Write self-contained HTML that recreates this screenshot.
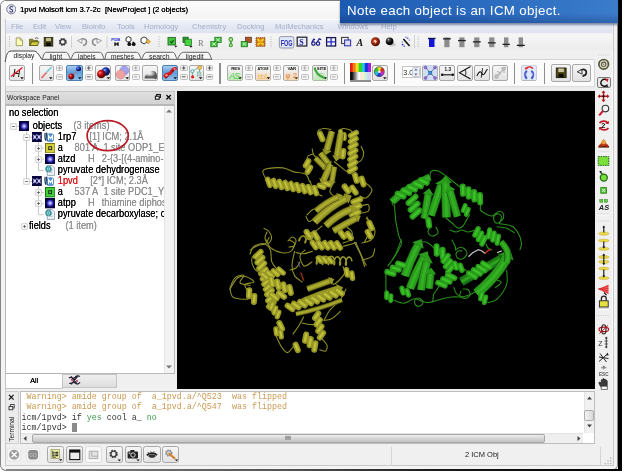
<!DOCTYPE html>
<html lang="en">
<head>
<meta charset="utf-8">
<title>1pvd Molsoft icm 3.7-2c</title>
<style>
*{box-sizing:border-box;margin:0;padding:0}
html,body{width:630px;height:476px;overflow:hidden;background:#fff}
body{font-family:"Liberation Sans",sans-serif;position:relative;color:#000}
.a{position:absolute}
.t{position:absolute;white-space:nowrap;line-height:1}
#win{left:0;top:0;width:618px;height:470.500px;background:#f3f3f3;border:1px solid #858585;border-radius:6px 0 6px 6px;border-top-color:#7c7c7c}
#shadowR{left:618.400px;top:0;width:3.400px;height:470.800px;background:#000}
#title{left:20px;top:5.500px;font-size:7.750px;color:#000;text-shadow:0 0 0.400px #000;letter-spacing:-0.05px}
#menubar{left:6px;top:19px;width:606px;height:14px;background:linear-gradient(#eef1f8,#e3e7f3 60%,#dfe3f0);border-top:1px solid #fff}
.mi{top:22.5px;font-size:7.6px;color:#a4aec6}
.btn{position:absolute;border:1px solid #a9a9a9;border-radius:2px;background:linear-gradient(#f6f6f6,#e2e2e2)}
.btn.sel{background:linear-gradient(#a9cdee,#5f9fdc 45%,#8fbfe9);border-color:#4f7fb0}
.pm{position:absolute;width:7.5px;height:8px;border:1px solid #bdbdbd;border-radius:1.5px;background:#f4f4f4;font-size:6px;line-height:6px;text-align:center;color:#777}
.vsep{position:absolute;width:1px;background:#8e8e8e}
</style>
</head>
<body>
<div id="root" class="a" style="left:0;top:0;width:630px;height:476px;will-change:transform">
<div id="win" class="a"></div>
<div id="shadowR" class="a"></div>
<div class="a" style="left:1px;top:1px;width:616px;height:18px;background:linear-gradient(#fcfcfc,#f3f3f3);border-radius:5px 0 0 0"></div>
<div class="a" style="left:5px;top:19px;width:608.500px;height:447px;border:1px solid #c9c9c9;background:#f0f0f0"></div>
<div class="a" style="left:6px;top:469.300px;width:612px;height:1.400px;background:linear-gradient(90deg,#858585,#555 45%,#1a1a1a 70%,#000)"></div>
<!-- app icon -->
<svg class="a" style="left:5.800px;top:4.200px" width="10.500" height="10.500" viewBox="0 0 11 11"><circle cx="5.5" cy="5.5" r="4.8" fill="#e9e9f3" stroke="#6a6a86" stroke-width="0.9"/><path d="M7.3 3.2C5.5 2 3.6 3 4 4.5 4.4 5.8 7 5.3 7 7 7 8.5 4.8 8.8 3.6 7.8" fill="none" stroke="#3c3c78" stroke-width="1.1"/></svg>
<div id="title" class="t">1pvd Molsoft icm 3.7-2c&nbsp; [NewProject ] (2 objects)</div>
<div id="menubar" class="a"></div>
<div class="t mi" style="left:11px">File</div>
<div class="t mi" style="left:33px">Edit</div>
<div class="t mi" style="left:55px">View</div>
<div class="t mi" style="left:82px">Bioinfo</div>
<div class="t mi" style="left:117px">Tools</div>
<div class="t mi" style="left:144px">Homology</div>
<div class="t mi" style="left:192px">Chemistry</div>
<div class="t mi" style="left:237px">Docking</div>
<div class="t mi" style="left:275px">MolMechanics</div>
<div class="t mi" style="left:337.500px">Windows</div>
<div class="t mi" style="left:381px">Help</div>
<!-- toolbar 1 -->
<div class="a" style="left:6px;top:33.500px;width:606px;height:16.500px;background:linear-gradient(#f6f6f6,#ececec)"></div>
<svg class="a" style="left:5px;top:33px" width="600" height="18" viewBox="5 33 600 18" font-family="Liberation Sans, sans-serif">
<g fill="#b4b4b4"><g id="grip"><rect x="9" y="36.500" width="1" height="1"/><rect x="9" y="38.800" width="1" height="1"/><rect x="9" y="41.100" width="1" height="1"/><rect x="9" y="43.400" width="1" height="1"/><rect x="9" y="45.700" width="1" height="1"/></g>
<use href="#grip" x="149.500"/><use href="#grip" x="261.500"/><use href="#grip" x="408.700"/></g>
<path d="M71.500 36v12M107 36v12M414.500 35v13" stroke="#c9c9c9" stroke-width="0.800"/>
<!-- new -->
<path d="M16.200 37.900h4l2.300 2.300v5.400h-6.300z" fill="#ffffb4" stroke="#8a8a5a" stroke-width="0.800"/><path d="M20.200 37.900v2.300h2.300" fill="none" stroke="#8a8a5a" stroke-width="0.700"/>
<!-- open -->
<path d="M29.600 45.500v-6.300h3l1 1.200h4v5.100z" fill="#8e8a20" stroke="#4c4a10" stroke-width="0.700"/><path d="M29.800 45.500l2-3.700h7.400l-1.800 3.700z" fill="#d2cc3c" stroke="#4c4a10" stroke-width="0.700"/><path d="M35 38.600c1.200-1.300 2.700-1 3.400.2" fill="none" stroke="#222" stroke-width="0.700"/>
<!-- save -->
<rect x="44.200" y="37.500" width="8.600" height="8.600" fill="#4b4a16" stroke="#1d1c08" stroke-width="0.800"/><rect x="46" y="37.900" width="5" height="3.200" fill="#bdbb90"/><rect x="46.200" y="42.600" width="4.600" height="3.400" fill="#0c0c04"/>
<!-- gear -->
<circle cx="62.800" cy="41.900" r="3" fill="none" stroke="#3c3c3c" stroke-width="2" stroke-dasharray="1.500 0.860"/><circle cx="62.800" cy="41.900" r="2.500" fill="none" stroke="#3c3c3c" stroke-width="1.200"/>
<!-- undo / redo -->
<g fill="none" stroke="#8b8b8b" stroke-width="1.500"><path d="M81 39.800c2.600-2.200 6 -.4 5.400 2.800-.3 1.700-1.700 2.700-3.300 2.800"/><path d="M98 39.800c-2.600-2.200-6-.4-5.400 2.800.3 1.700 1.700 2.700 3.300 2.800"/></g>
<path d="M77.500 40.600l4.600-1.900-.2 4.600z" fill="#f4f4f4" stroke="#8b8b8b" stroke-width="0.800"/><path d="M101.500 40.600l-4.600-1.900.2 4.600z" fill="#f4f4f4" stroke="#8b8b8b" stroke-width="0.800"/>
<!-- PDB -->
<text x="111.300" y="40.600" font-size="4.300" font-weight="bold" fill="#2a2ad0">PDB</text><path d="M115 42.200v3.800M118 42.200v3.800M114.600 44h3.800" stroke="#111" stroke-width="1.300"/>
<!-- search mol -->
<path d="M126 38l2.400-1.400 2.600 1.300v3l-2.500 1.500-2.500-1.400z" fill="#fff" stroke="#222" stroke-width="0.900"/><circle cx="129.300" cy="44.200" r="1.900" fill="#111"/><circle cx="133.700" cy="44.200" r="1.900" fill="#111"/><path d="M128.500 41.500l1 2M133 41.800l.8 1.500" stroke="#111" stroke-width="1.300"/>
<!-- tag mol -->
<path d="M141 38.600l3-1.700 3 1.600.1 3.600-3 1.800-3.100-1.700z" fill="#fff" stroke="#222" stroke-width="0.900"/><path d="M146 41.300l2.300-2 2.200 2.500-2.300 2.200z" fill="#e8b53c" stroke="#a8781c" stroke-width="0.500"/>
<!-- green 1 -->
<rect x="168" y="37.400" width="7.400" height="7.600" fill="#3fc43a" stroke="#2a6a2a" stroke-width="0.900"/><path d="M170.300 41.400l1.300 1.400 2.100-2.800" stroke="#114411" stroke-width="1.100" fill="none"/><path d="M174.300 45.800h3l-1.500 1.700z" fill="#111"/>
<!-- green 2 -->
<rect x="183" y="37.200" width="5.200" height="5.200" fill="#2f9a2c" stroke="#1f5a1f" stroke-width="0.800"/><rect x="185" y="39.200" width="6.400" height="6.200" fill="#46d440" stroke="#2a7a2a" stroke-width="0.800"/><path d="M189.400 46h3l-1.500 1.700z" fill="#111"/>
<!-- R -->
<text x="198" y="46" font-size="8.600" font-family="Liberation Serif, serif" fill="#7a7a7a">R</text>
<!-- green xx -->
<g stroke="#1f6a1f" stroke-width="0.700"><rect x="214.800" y="37.200" width="6.400" height="5.400" fill="#3cc43a"/><rect x="210.800" y="41.400" width="6.400" height="5.400" fill="#3cc43a"/></g><path d="M216.200 38.400l3.600 3M219.800 38.400l-3.600 3M212.200 42.600l3.600 3M215.800 42.600l-3.600 3" stroke="#d8ffd0" stroke-width="0.900"/>
<!-- green 8 -->
<circle cx="230.800" cy="39.400" r="1.800" fill="#c8e8b0" stroke="#3a9a30" stroke-width="1.100"/><path d="M230.800 41.200v3" stroke="#3a9a30" stroke-width="1.800"/><circle cx="230.800" cy="45.300" r="1.500" fill="#c8e8b0" stroke="#3a9a30" stroke-width="1.100"/>
<!-- brown/green -->
<rect x="245.400" y="37.200" width="6" height="5.200" fill="#a8552c" stroke="#6a3010" stroke-width="0.700"/><rect x="241.200" y="41.400" width="6.200" height="5.400" fill="#3cc43a" stroke="#1f6a1f" stroke-width="0.700"/><path d="M242.600 42.600l3.400 3M246 42.600l-3.400 3" stroke="#d8ffd0" stroke-width="0.900"/>
<!-- orange X -->
<rect x="256" y="37.600" width="9" height="8.800" fill="#c87a20" stroke="#8a3a10" stroke-width="0.800" stroke-dasharray="1.200 0.800"/><path d="M257.500 39l6 6M263.500 39l-6 6" stroke="#f0d020" stroke-width="2"/><circle cx="260.500" cy="42" r="1.600" fill="#e8a010"/>
<!-- FOG -->
<rect x="279.300" y="36.600" width="14.600" height="11.400" rx="1.800" fill="#dfe8f6" stroke="#8a8fa0" stroke-width="0.900"/><text x="280.700" y="45.600" font-size="8.800" font-weight="bold" fill="#2c2cb4" textLength="11.800" lengthAdjust="spacingAndGlyphs">FOG</text>
<!-- S -->
<rect x="297.200" y="37.200" width="9.600" height="8.800" fill="#e8ecf8" stroke="#2a2a3a" stroke-width="1.300"/><text x="299.200" y="45" font-size="8" font-weight="bold" font-family="Liberation Serif, serif" fill="#1c1c9c">S</text>
<!-- glasses -->
<g fill="none" stroke="#22228a" stroke-width="1.300"><circle cx="313.400" cy="43.600" r="1.700"/><circle cx="318" cy="43.600" r="1.700"/><path d="M312 42.200l1.800-3 1.200.6M317.400 42l1.800-3.200 2 .8"/></g>
<!-- grid -->
<rect x="326.600" y="37.600" width="9" height="8.400" fill="#f4f6ff" stroke="#1a1a4a" stroke-width="1.300"/><path d="M331.100 37.600v8.400M326.600 41.800h9" stroke="#2a2ac0" stroke-width="1.300"/>
<!-- overlay -->
<rect x="341.600" y="37.400" width="6.600" height="6.200" fill="#f4f4fa" stroke="#333" stroke-width="1"/><rect x="344.600" y="40" width="6" height="5.800" fill="#dcdcf8" stroke="#3838b0" stroke-width="1.100"/>
<!-- A -->
<text x="356.400" y="46" font-size="10" font-weight="bold" font-style="italic" font-family="Liberation Serif, serif" fill="#111">A</text>
<!-- red ball -->
<defs><radialGradient id="rb" cx="0.400" cy="0.400"><stop offset="0" stop-color="#ffd8b0"/><stop offset="0.300" stop-color="#d0401c"/><stop offset="1" stop-color="#5a1408"/></radialGradient><radialGradient id="kb" cx="0.350" cy="0.300"><stop offset="0" stop-color="#e8e8e8"/><stop offset="0.250" stop-color="#555"/><stop offset="1" stop-color="#000"/></radialGradient></defs>
<circle cx="375.500" cy="41.800" r="4.500" fill="url(#rb)"/><path d="M373.800 41.600h3.200M375.400 40v3.200" stroke="#ffe0c8" stroke-width="0.900"/>
<ellipse cx="392" cy="44.200" rx="3.600" ry="2" fill="#c4c4c4"/><circle cx="389.600" cy="41.200" r="3.800" fill="url(#kb)"/>
<!-- sparkle -->
<path d="M403.400 39l6.200 7" stroke="#111" stroke-width="1.600"/><g fill="#2a2ad0"><circle cx="407.800" cy="38.200" r="0.700"/><circle cx="409.300" cy="40" r="0.600"/><circle cx="406" cy="37.200" r="0.600"/><circle cx="402.600" cy="44.600" r="0.900"/><circle cx="404.200" cy="46.200" r="0.700"/><circle cx="402.200" cy="42" r="0.600"/></g>
<!-- T bars -->
<rect x="429" y="39" width="5.500" height="8" fill="#1414d8"/><rect x="428" y="37.800" width="7.500" height="1.400" fill="#141450"/>
<g fill="#8c8c8c"><rect x="444.300" y="37.400" width="5.200" height="9.800"/><rect x="459.300" y="37.400" width="5.200" height="9.800"/><rect x="474.200" y="37.400" width="5.200" height="9.800"/><rect x="489.200" y="37.400" width="5.200" height="9.800"/><rect x="504" y="37.400" width="4.400" height="9.800"/><rect x="518.600" y="37.400" width="4.400" height="9.800"/></g>
<g fill="#222"><rect x="443" y="38.200" width="7.800" height="1.300"/><rect x="458" y="39.900" width="7.800" height="1.300"/><rect x="472.900" y="41.200" width="7.800" height="1.300"/><rect x="487.900" y="42.200" width="7.800" height="1.300"/><rect x="502.600" y="43.700" width="7.200" height="1.300"/><rect x="516.800" y="44.700" width="8" height="1.300"/></g>
</svg>
<!-- toolbar 2 -->
<div class="a" style="left:6px;top:50px;width:590px;height:9.500px;background:#f0f0f0"></div>
<div class="a" style="left:6px;top:59.500px;width:588.500px;height:27px;background:#fbfbfb;border-right:1px solid #d4d4d4;border-bottom:1px solid #dcdcdc"></div>
<div class="a" style="left:6px;top:86.500px;width:588.500px;height:4px;background:#eaeaea"></div>
<svg class="a" style="left:0;top:48px" width="600" height="14" viewBox="0 48 600 14" font-family="Liberation Sans, sans-serif"><path d="M212 59.500H594" stroke="#cfcfcf" stroke-width="0.900"/><path d="M42 59.300H212" stroke="#7a7a7a" stroke-width="0.900"/><path d="M177.4 59.300C178.9 57 180.3 52.300 183.3 52.300H207.1C210.1 52.300 210 57 212 59.300z" fill="#f6f6f6" stroke="#555" stroke-width="0.900"/><text x="185.7" y="58.800" font-size="6.900" fill="#222" textLength="18.1" lengthAdjust="spacingAndGlyphs" dy="-0.300">ligedit</text><path d="M141.6 59.300C143.1 57 143.8 52.300 146.8 52.300H172.5C175.5 52.300 175.4 57 177.4 59.300z" fill="#f6f6f6" stroke="#555" stroke-width="0.900"/><text x="149" y="58.800" font-size="6.900" fill="#222" textLength="20.5" lengthAdjust="spacingAndGlyphs" dy="-0.300">search</text><path d="M104.6 59.300C106.1 57 105 52.300 108 52.300H136.5C139.5 52.300 139.6 57 141.6 59.300z" fill="#f6f6f6" stroke="#555" stroke-width="0.900"/><text x="111" y="58.800" font-size="6.900" fill="#222" textLength="23" lengthAdjust="spacingAndGlyphs" dy="-0.300">meshes</text><path d="M70.8 59.300C72.3 57 73 52.300 76 52.300H99.7C102.7 52.300 102.6 57 104.6 59.300z" fill="#f6f6f6" stroke="#555" stroke-width="0.900"/><text x="78" y="58.800" font-size="6.900" fill="#222" textLength="17.5" lengthAdjust="spacingAndGlyphs" dy="-0.300">labels</text><path d="M42 59.300C43.5 57 43.4 52.300 46.4 52.300H65.7C68.7 52.300 68.8 57 70.8 59.300z" fill="#f6f6f6" stroke="#555" stroke-width="0.900"/><text x="49.4" y="58.800" font-size="6.900" fill="#222" textLength="12.9" lengthAdjust="spacingAndGlyphs" dy="-0.300">light</text><path d="M5.2 61.500C6.2 55 7.300000000000001 51 11.3 51H33.8C37.3 51 39.5 56 42 59.800V61.500z" fill="#fbfbfb" stroke="none"/><path d="M5.2 62C6.2 55 7.300000000000001 51 11.3 51H33.8C37.3 51 39.5 56 42 59.600" fill="none" stroke="#444" stroke-width="1"/><text x="13.6" y="58.300" font-size="6.900" fill="#111" textLength="20.8" lengthAdjust="spacingAndGlyphs">display</text></svg>
<div class="btn" style="left:9px;top:64.5px;width:16.0px;height:16.5px"></div>
<div class="btn" style="left:38.5px;top:64.5px;width:15.3px;height:16.5px"></div>
<div class="btn sel" style="left:66.2px;top:64.5px;width:16.5px;height:16.5px"></div>
<div class="btn" style="left:95.2px;top:64.5px;width:16.1px;height:16.5px"></div>
<div class="btn" style="left:115px;top:64.5px;width:15.2px;height:16.5px"></div>
<div class="btn" style="left:142.4px;top:64.5px;width:15.9px;height:16.5px"></div>
<div class="btn sel" style="left:162px;top:64.5px;width:16.2px;height:16.5px"></div>
<div class="btn" style="left:189.3px;top:64.5px;width:14.3px;height:16.5px"></div>
<div class="btn" style="left:227px;top:64.5px;width:16.0px;height:16.5px"></div>
<div class="btn" style="left:255.3px;top:64.5px;width:16.2px;height:16.5px"></div>
<div class="btn" style="left:283.2px;top:64.5px;width:16.0px;height:16.5px"></div>
<div class="btn" style="left:311.9px;top:64.5px;width:16.3px;height:16.5px"></div>
<div class="btn" style="left:372.2px;top:64.5px;width:15.5px;height:16.5px"></div>
<div class="btn" style="left:422.2px;top:64.5px;width:15.8px;height:16.5px"></div>
<div class="btn" style="left:439.3px;top:64.5px;width:16.2px;height:16.5px"></div>
<div class="btn" style="left:457px;top:64.5px;width:15.6px;height:16.5px"></div>
<div class="btn" style="left:474.2px;top:64.5px;width:15.8px;height:16.5px"></div>
<div class="btn" style="left:491.9px;top:64.5px;width:16.1px;height:16.5px"></div>
<div class="btn" style="left:520.6px;top:64.5px;width:16.8px;height:16.5px"></div>
<div class="btn" style="left:551.4px;top:63.5px;width:19.5px;height:18.7px"></div>
<div class="btn" style="left:572px;top:63.5px;width:18.8px;height:18.7px"></div>
<div class="pm" style="left:55.8px;top:64.800px;height:6.400px"></div><div class="pm" style="left:55.8px;top:73.600px;height:6.400px"></div>
<div class="pm" style="left:85px;top:64.800px;height:6.400px"></div><div class="pm" style="left:85px;top:73.600px;height:6.400px"></div>
<div class="pm" style="left:132px;top:64.800px;height:6.400px"></div><div class="pm" style="left:132px;top:73.600px;height:6.400px"></div>
<div class="pm" style="left:180px;top:64.800px;height:6.400px"></div><div class="pm" style="left:180px;top:73.600px;height:6.400px"></div>
<div class="pm" style="left:205.8px;top:64.800px;height:6.400px"></div><div class="pm" style="left:205.8px;top:73.600px;height:6.400px"></div>
<div class="pm" style="left:245px;top:64.800px;height:6.400px"></div><div class="pm" style="left:245px;top:73.600px;height:6.400px"></div>
<div class="pm" style="left:273px;top:64.800px;height:6.400px"></div><div class="pm" style="left:273px;top:73.600px;height:6.400px"></div>
<div class="pm" style="left:301px;top:64.800px;height:6.400px"></div><div class="pm" style="left:301px;top:73.600px;height:6.400px"></div>
<div class="pm" style="left:330px;top:64.800px;height:6.400px"></div><div class="pm" style="left:330px;top:73.600px;height:6.400px"></div>
<div class="vsep" style="left:31.6px;top:62.500px;height:21px;width:1.300px"></div>
<div class="vsep" style="left:219.4px;top:62.500px;height:21px;width:1.300px"></div>
<div class="vsep" style="left:343.8px;top:62.500px;height:21px;width:1.300px"></div>
<div class="vsep" style="left:393.8px;top:62.500px;height:21px;width:1.300px"></div>
<div class="vsep" style="left:513.7px;top:62.500px;height:21px;width:1.300px"></div>
<div class="vsep" style="left:543.7px;top:62.500px;height:21px;width:1.300px"></div>
<div class="a" style="left:350px;top:62.800px;width:20.600px;height:19px;background:#8e8e8e"></div>
<div class="a" style="left:350px;top:62.800px;width:20.600px;height:8.800px;background:linear-gradient(90deg,#e81c1c 0 10%,#f07a18 15% 24%,#f0e020 30% 38%,#30d030 45% 55%,#20c8d8 60% 68%,#2030e0 73% 83%,#a020d8 88%)"></div>
<div class="a" style="left:350px;top:71.600px;width:20.600px;height:8px;background:linear-gradient(90deg,#111 0 10%,#555 18%,#999 28%,#e8e8e8 38%,#fff 44%,#f8e0d8 52%,#f8f4c8 62%,#d4f0d0 72%,#c8e4f4 82%,#d8d0f0 95%)"></div>
<div class="a" style="left:401.500px;top:66px;width:19px;height:12px;background:#fff;border:1px solid #c8c8c8"></div>
<div class="t" style="left:403.300px;top:68.500px;font-size:7.200px;color:#222;width:8.500px;overflow:hidden">3.0</div>
<div class="a" style="left:411.800px;top:66.600px;width:8.200px;height:10.800px;background:#eef0f6;border:1px solid #c2c6d0;border-radius:1.500px"></div>
<svg class="a" style="left:0;top:60px" width="600" height="26" viewBox="0 60 600 26" font-family="Liberation Sans, sans-serif"><defs>
<radialGradient id="rr" cx="0.350" cy="0.350"><stop offset="0" stop-color="#ff9a9a"/><stop offset="0.400" stop-color="#e01c1c"/><stop offset="1" stop-color="#6a0808"/></radialGradient>
<radialGradient id="bb" cx="0.350" cy="0.350"><stop offset="0" stop-color="#a8b8ff"/><stop offset="0.400" stop-color="#2848d0"/><stop offset="1" stop-color="#0a1460"/></radialGradient>
<radialGradient id="gg" cx="0.400" cy="0.300"><stop offset="0" stop-color="#fff"/><stop offset="0.500" stop-color="#bdbdbd"/><stop offset="1" stop-color="#5a5a5a"/></radialGradient>
<path id="dd" d="M0 0h3.600l-1.800 2z" fill="#111"/>
</defs><defs><linearGradient id="tg" x1="0" y1="0" x2="0" y2="1"><stop offset="0.300" stop-color="#c8ecc0" stop-opacity="0"/><stop offset="1" stop-color="#bfe8b4"/></linearGradient><linearGradient id="tp" x1="0" y1="0" x2="0" y2="1"><stop offset="0.300" stop-color="#f8dcb8" stop-opacity="0"/><stop offset="1" stop-color="#f6d8b0"/></linearGradient></defs><rect x="227.800" y="65.300" width="14.400" height="15" rx="1.500" fill="url(#tg)"/><rect x="256.100" y="65.300" width="14.600" height="15" rx="1.500" fill="url(#tp)"/><rect x="284" y="65.300" width="14.400" height="15" rx="1.500" fill="url(#tp)"/><rect x="312.700" y="65.300" width="14.700" height="15" rx="1.500" fill="url(#tg)"/><use href="#dd" x="20.2" y="77.300"/><use href="#dd" x="49" y="77.300"/><use href="#dd" x="78" y="77.300"/><use href="#dd" x="106.6" y="77.300"/><use href="#dd" x="125.4" y="77.300"/><use href="#dd" x="153.6" y="77.300"/><use href="#dd" x="173.4" y="77.300"/><use href="#dd" x="198.8" y="77.300"/><use href="#dd" x="238.2" y="77.300"/><use href="#dd" x="266.6" y="77.300"/><use href="#dd" x="294.4" y="77.300"/><use href="#dd" x="323.4" y="77.300"/><use href="#dd" x="383" y="77.300"/><path d="M57.75 68h3.600M59.55 66.200v3.600M57.75 76.800h3.600" stroke="#9a9a9a" stroke-width="0.800"/><path d="M86.95 68h3.600M88.75 66.200v3.600M86.95 76.800h3.600" stroke="#333" stroke-width="0.800"/><path d="M133.95 68h3.600M135.75 66.200v3.600M133.95 76.800h3.600" stroke="#9a9a9a" stroke-width="0.800"/><path d="M181.95 68h3.600M183.75 66.200v3.600M181.95 76.800h3.600" stroke="#333" stroke-width="0.800"/><path d="M207.75 68h3.600M209.55 66.200v3.600M207.75 76.800h3.600" stroke="#333" stroke-width="0.800"/><path d="M246.95 68h3.600M248.75 66.200v3.600M246.95 76.800h3.600" stroke="#9a9a9a" stroke-width="0.800"/><path d="M274.95 68h3.600M276.75 66.200v3.600M274.95 76.800h3.600" stroke="#9a9a9a" stroke-width="0.800"/><path d="M302.95 68h3.600M304.75 66.200v3.600M302.95 76.800h3.600" stroke="#9a9a9a" stroke-width="0.800"/><path d="M331.95 68h3.600M333.75 66.200v3.600M331.95 76.800h3.600" stroke="#9a9a9a" stroke-width="0.800"/><text x="12.800" y="77" font-size="10.500" font-style="italic" fill="#111">H</text><path d="M11 76.500L22.500 67.500" stroke="#e01c2c" stroke-width="1.500"/><path d="M41.500 78L46.500 72.500" stroke="#e86a6a" stroke-width="1.700"/><path d="M46.500 72.500L51.500 67" stroke="#7ac8d8" stroke-width="1.700"/><path d="M71.500 77L78.500 69" stroke="#8a8aa0" stroke-width="1.800"/><circle cx="71.300" cy="76.500" r="2.900" fill="url(#rr)"/><circle cx="78.600" cy="68.800" r="2.500" fill="url(#bb)"/><circle cx="105.800" cy="71.500" r="4.200" fill="url(#bb)"/><circle cx="101.300" cy="74" r="4.300" fill="url(#rr)"/><g opacity="0.750"><circle cx="124.300" cy="70.500" r="4.400" fill="#8a8af0" stroke="#5a5ad0" stroke-width="0.600"/><circle cx="120.600" cy="74.500" r="4.400" fill="#f08a8a" stroke="#e05a5a" stroke-width="0.600"/></g><path d="M144.500 78.500c0-3 2-4.500 4.500-5 1.500-3 6-3.500 7.500 0 .800 2 .600 4 .300 5z" fill="url(#gg)"/><path d="M165 76c1.500-3 4-1 5.500-3s2-4.500 5-4.500" stroke="#d81818" stroke-width="3.200" fill="none" stroke-linecap="round"/><path d="M165.500 78.500l3-3M172 72l3.500-3.500" stroke="#8a0808" stroke-width="1.200"/><circle cx="166.500" cy="75.300" r="1.200" fill="#ff9090"/><circle cx="174.600" cy="69" r="1.100" fill="#ff9090"/><path d="M192.500 71.500v5M193 71l6-4M199.500 68v8" stroke="#7ab0b0" stroke-width="1" fill="none"/><circle cx="199.600" cy="67.600" r="2" fill="#f0c050" stroke="#a07820" stroke-width="0.500"/><circle cx="192.400" cy="71.200" r="1.500" fill="#e8f8f8" stroke="#3a9a9a" stroke-width="0.800"/><circle cx="192.600" cy="76.800" r="1.600" fill="#e02020"/><rect x="197.400" y="72" width="3.600" height="4" fill="#b8d8d0" stroke="#6aa09a" stroke-width="0.500"/><text x="231.200" y="70" font-size="4.300" font-weight="bold" fill="#111">RES</text><text x="229.400" y="78.600" font-size="8.500" font-style="italic" fill="#5ac850" textLength="10.500">AS</text><text x="257.600" y="70" font-size="4.300" font-weight="bold" fill="#111" textLength="10.800" lengthAdjust="spacingAndGlyphs">ATOM</text><text x="257.600" y="78.600" font-size="7.600" fill="#f0b860" textLength="10.500">bb1</text><text x="287.400" y="70" font-size="4.300" font-weight="bold" fill="#111">VAR</text><text x="285.600" y="78" font-size="7.600" fill="#e88040">φ 2</text><text x="316.800" y="70.300" font-size="4.300" font-weight="bold" fill="#111" textLength="9.600" lengthAdjust="spacingAndGlyphs">SITE</text><path d="M314.500 67.500c1 5 4.500 8.500 10 10.500" stroke="#3aa83a" stroke-width="2.200" fill="none"/><path d="M320 73.500c1.500-.5 3 0 4 1.500" stroke="#9ad09a" stroke-width="0.800" fill="none"/><circle cx="379.300" cy="71.700" r="5" fill="#888"/><path d="M379.300 71.700L384.300 71.700A5 5 0 0 0 381.800 67.370z" fill="#e82020"/><path d="M379.300 71.700L381.800 67.370A5 5 0 0 0 376.800 67.370z" fill="#e8d820"/><path d="M379.300 71.700L376.800 67.370A5 5 0 0 0 374.300 71.700z" fill="#28c828"/><path d="M379.300 71.700L374.300 71.700A5 5 0 0 0 376.800 76.030z" fill="#20c0d0"/><path d="M379.300 71.700L376.800 76.030A5 5 0 0 0 381.800 76.030z" fill="#2838e0"/><path d="M379.300 71.700L381.800 76.030A5 5 0 0 0 384.300 71.700z" fill="#c828c8"/><circle cx="379.300" cy="71.700" r="1.400" fill="#fff" opacity="0.800"/><circle cx="379.300" cy="71.700" r="5" fill="none" stroke="#444" stroke-width="0.600"/><path d="M414.200 70.600l1.700-2 1.700 2zM414.200 73.400l1.700 2 1.700-2z" fill="#5a6a9a"/><rect x="423" y="65.300" width="14.200" height="15" rx="1.500" fill="#cfe0f4"/><path d="M425.500 67.500l9.500 10.500M435 67.500l-9.500 10.500" stroke="#6a6aa8" stroke-width="0.900"/><g fill="#9a6ad0" stroke="#5a3a90" stroke-width="0.400"><circle cx="425.500" cy="67.500" r="1.500"/><circle cx="435" cy="67.500" r="1.500"/><circle cx="425.500" cy="78" r="1.500"/><circle cx="435" cy="78" r="1.500"/></g><rect x="428.700" y="71.200" width="3.200" height="3.200" fill="#3a8ad0" stroke="#1a4a90" stroke-width="0.400"/><text x="444.600" y="70.600" font-size="4.600" font-weight="bold" fill="#111">1.3</text><path d="M442 74.800h11" stroke="#111" stroke-width="1.100"/><circle cx="442.200" cy="74.800" r="1.300" fill="#111"/><circle cx="452.800" cy="74.800" r="1.300" fill="#111"/><path d="M470.500 66.500L459.500 72.800 470.500 79" stroke="#111" stroke-width="1.100" fill="none"/><path d="M465 69.800c1.200 1.800 1.200 4.200 0 6" stroke="#111" stroke-width="0.900" fill="none"/><path d="M476.800 76c1.300-2.800 2.600-5.200 4.200-3.800s1.200 3.400 2.800 2.200 2-4.200 3.800-5.200" stroke="#111" stroke-width="1.100" fill="none"/><path d="M482.600 68.200l-1.400 9.400" stroke="#111" stroke-width="0.900"/><g stroke="#b4b4b4" fill="none" stroke-width="1.200"><path d="M495 78l10-10M497 71.500c2 0 3 1.500 3 3.500M500.500 68c2.500.5 4 2.500 3.500 5"/><circle cx="496.500" cy="76.500" r="1.600" fill="#c8c8c8"/><circle cx="504" cy="68.600" r="1.400" fill="#c8c8c8"/></g><rect x="521.400" y="65.300" width="15.200" height="15" rx="1.500" fill="#dfe8f6"/><path d="M526 68.500c2-2 5-2 7 0" stroke="#e02020" stroke-width="1.300" fill="none"/><path d="M525 67.200l.600 2.800 2.400-1.400z" fill="#e02020"/><path d="M526.300 71.500c-1.500 1.500-1.500 4.500 0 6.500M532 71.500c1.500 1.500 1.500 4.500 0 6.500" stroke="#4a5ad0" stroke-width="2.200" fill="none" stroke-linecap="round"/><circle cx="526.500" cy="74.500" r="1" fill="#c8d0ff"/><circle cx="532" cy="74.500" r="1" fill="#c8d0ff"/><rect x="556.300" y="68" width="9.800" height="9.600" fill="#4b4a16" stroke="#1d1c08" stroke-width="0.900"/><rect x="558.300" y="68.500" width="5.600" height="3.500" fill="#c8c6a0"/><rect x="558.600" y="73.800" width="5" height="3.700" fill="#0c0c04"/><path d="M580.500 70.800c2.200-2.600 6.200-1.200 5.800 2-.2 1.800-1.500 2.800-3.200 2.900" fill="none" stroke="#222" stroke-width="1.700"/><path d="M577.200 71.800l4.600-2.300.3 4.600z" fill="#f4f4f4" stroke="#222" stroke-width="0.900"/><path d="M583.200 75v1.800" stroke="#222" stroke-width="1.500"/></svg>
<!-- workspace panel -->
<div class="a" style="left:5px;top:91px;width:170px;height:14px;background:linear-gradient(#dfdfdf,#d3d3d3);border:1px solid #c4c4c4;border-bottom-color:#b8b8b8"></div>
<div class="t" style="left:7px;top:94.5px;font-size:6.7px;color:#222">Workspace Panel</div>
<svg class="a" style="left:154px;top:93px" width="20" height="9" viewBox="0 0 20 9"><rect x="2.600" y="1.500" width="3.800" height="3" fill="#e4e4e4" stroke="#1a1a1a" stroke-width="1.100"/><rect x="1.400" y="3.200" width="3.800" height="3" fill="#f4f4f4" stroke="#1a1a1a" stroke-width="1.100"/><path d="M12.400 2l4.400 4.500M16.800 2l-4.400 4.500" stroke="#111" stroke-width="1.300"/></svg>
<div class="a" style="left:5px;top:105px;width:170px;height:268.5px;background:#fff;border:1px solid #b9b9b9"></div>
<div class="a" style="left:163.5px;top:106px;width:10.5px;height:266.5px;background:#f3f3f3;border-left:1px solid #e4e4e4"></div>
<svg class="a" style="left:165px;top:108px" width="8" height="6" viewBox="0 0 8 6"><path d="M1 4.5L4 1.5 7 4.5z" fill="#777"/></svg>
<svg class="a" style="left:165px;top:364px" width="8" height="6" viewBox="0 0 8 6"><path d="M1 1.5L4 4.5 7 1.5z" fill="#777"/></svg>
<!-- bottom tabs -->
<div class="a" style="left:5px;top:372.500px;width:57.500px;height:16px;background:#fff;border:1px solid #c4c4c4;border-top-color:#b4b4b4"></div>
<div class="t" style="left:30.300px;top:377.200px;font-size:7.200px;color:#000;text-shadow:0 0 0.400px #000">All</div>
<div class="a" style="left:62.5px;top:374px;width:54px;height:14px;background:linear-gradient(#efefef,#dedede);border:1px solid #c4c4c4;border-left:none"></div>
<svg class="a" style="left:68px;top:375px" width="13" height="11" viewBox="0 0 13 11"><path d="M1 3.2c2-2.4 4.2 1.4 5.6-.4S10.400.2 11.800 1.600M1.400 8c1.800 1.600 3.600-1.800 5.400-.2s3.400 1.800 5.200-.4M3 1.500l6.400 7.800M9.600 1.400L3.200 9.400" stroke="#2a2438" stroke-width="1.3" fill="none"/><circle cx="4" cy="5" r="1" fill="#b03050"/><circle cx="9" cy="6" r="1" fill="#b03050"/></svg>
<div class="a" style="left:6px;top:106px;width:157.500px;height:266px;overflow:hidden"><div class="a" style="left:-6px;top:-106px;width:300px;height:400px"><svg class="a" style="left:5px;top:105px" width="60" height="130" viewBox="5 105 60 130"><g stroke="#c2c2c2" stroke-width="0.900" fill="none"><path d="M13.500 126.2H19M26.500 131.2V181.5M26.500 137.2H32M26.500 181.5H32M38.500 141.2V170.4M38.500 148.2H44M38.500 159.2H44M38.500 170.4H44M38.500 185.5V214.7M38.500 192.6H44M38.500 203.7H44M38.500 214.7H44M24.500 226.2H28"/></g></svg>
<div class="t" style="left:9px;top:107.8px;font-size:9.25px;line-height:11px;color:#000;transform:scaleY(1.08);transform-origin:0 55%;text-shadow:0 0 0.450px currentColor;">no selection</div>
<svg class="a" style="left:10.0px;top:122.7px" width="7" height="7" viewBox="0 0 7 7"><rect x="0.800" y="0.800" width="5.400" height="5.400" fill="#fff" stroke="#c2c2c2" stroke-width="0.800"/><path d="M2 3.500h3" stroke="#555" stroke-width="0.800"/></svg>
<svg class="a" style="left:19.2px;top:120.9px" width="10.300" height="10.300" viewBox="0 0 10 10"><defs><radialGradient id="bg19126"><stop offset="0" stop-color="#e4e4ff"/><stop offset="0.300" stop-color="#9c9cff"/><stop offset="0.700" stop-color="#3432c0"/><stop offset="1" stop-color="#0a0850"/></radialGradient></defs><rect width="10" height="10" fill="#06053c"/><circle cx="5" cy="5" r="3.800" fill="url(#bg19126)"/></svg>
<div class="t" style="left:32.8px;top:120.7px;font-size:9.25px;line-height:11px;color:#000;transform:scaleY(1.08);transform-origin:0 55%;text-shadow:0 0 0.450px currentColor;">objects</div>
<div class="t" style="left:73.5px;top:120.7px;font-size:9.25px;line-height:11px;color:#8f8f8f;transform:scaleY(1.08);transform-origin:0 55%;text-shadow:0 0 0.450px currentColor;">(3 items)</div>
<svg class="a" style="left:23.0px;top:133.7px" width="7" height="7" viewBox="0 0 7 7"><rect x="0.800" y="0.800" width="5.400" height="5.400" fill="#fff" stroke="#c2c2c2" stroke-width="0.800"/><path d="M2 3.500h3" stroke="#555" stroke-width="0.800"/></svg>
<svg class="a" style="left:32.2px;top:131.9px" width="9.800" height="10" viewBox="0 0 11 10" preserveAspectRatio="none"><rect width="11" height="10" fill="#07063e"/><circle cx="3" cy="5" r="1.700" fill="#a8a8ff"/><circle cx="8" cy="5" r="1.700" fill="#a8a8ff"/><path d="M1 2.500L5.500 7.500 10 2.500M1 7.500L5.500 2.500 10 7.500" stroke="#dcdcff" stroke-width="0.9" fill="none"/></svg>
<svg class="a" style="left:44.4px;top:131.7px" width="10" height="11" viewBox="0 0 10 11"><path d="M1.200 0.800c-.5 2.500-.3 5.500.8 8M2.800 0.600c-.4 2.800-.2 5.800 1 8.600" stroke="#1f3d58" stroke-width="1.300" fill="none"/><rect x="3.400" y="1.800" width="6.200" height="7.800" rx="1.800" fill="#4d94dc" stroke="#2a64a8" stroke-width="0.600"/><path d="M4.500 8.300V3.600L6.500 6.600 8.500 3.600V8.300" stroke="#fff" stroke-width="1.100" fill="none"/></svg>
<div class="t" style="left:57.8px;top:131.7px;font-size:9.25px;line-height:11px;color:#000;transform:scaleY(1.08);transform-origin:0 55%;text-shadow:0 0 0.450px currentColor;">1rp7</div>
<div class="t" style="left:89.5px;top:131.7px;font-size:9.25px;line-height:11px;color:#8f8f8f;transform:scaleY(1.08);transform-origin:0 55%;text-shadow:0 0 0.450px currentColor;">[1] ICM; 2.1Å</div>
<svg class="a" style="left:35.0px;top:144.7px" width="7" height="7" viewBox="0 0 7 7"><rect x="0.800" y="0.800" width="5.400" height="5.400" fill="#fff" stroke="#c2c2c2" stroke-width="0.800"/><path d="M2 3.500h3" stroke="#555" stroke-width="0.800"/><path d="M3.500 2v3" stroke="#555" stroke-width="0.800"/></svg>
<svg class="a" style="left:44.6px;top:143.0px" width="10.400" height="10.400" viewBox="0 0 10 10"><rect x="0.500" y="0.500" width="9" height="9" fill="#d8d23a" stroke="#7a7410" stroke-width="1"/><rect x="3.600" y="3.600" width="2.800" height="2.800" fill="none" stroke="#222" stroke-width="0.900"/></svg>
<div class="t" style="left:57.8px;top:142.7px;font-size:9.25px;line-height:11px;color:#000;transform:scaleY(1.08);transform-origin:0 55%;text-shadow:0 0 0.450px currentColor;">a</div>
<div class="t" style="left:74.6px;top:142.7px;font-size:9.25px;line-height:11px;color:#8f8f8f;transform:scaleY(1.08);transform-origin:0 55%;text-shadow:0 0 0.450px currentColor;">801 A&nbsp; 1 site ODP1_ECOLI</div>
<svg class="a" style="left:35.0px;top:155.7px" width="7" height="7" viewBox="0 0 7 7"><rect x="0.800" y="0.800" width="5.400" height="5.400" fill="#fff" stroke="#c2c2c2" stroke-width="0.800"/><path d="M2 3.500h3" stroke="#555" stroke-width="0.800"/><path d="M3.500 2v3" stroke="#555" stroke-width="0.800"/></svg>
<svg class="a" style="left:44.5px;top:153.9px" width="10.300" height="10.300" viewBox="0 0 10 10"><defs><radialGradient id="bg44159"><stop offset="0" stop-color="#e4e4ff"/><stop offset="0.300" stop-color="#9c9cff"/><stop offset="0.700" stop-color="#3432c0"/><stop offset="1" stop-color="#0a0850"/></radialGradient></defs><rect width="10" height="10" fill="#06053c"/><circle cx="5" cy="5" r="3.800" fill="url(#bg44159)"/></svg>
<div class="t" style="left:57.8px;top:153.7px;font-size:9.25px;line-height:11px;color:#000;transform:scaleY(1.08);transform-origin:0 55%;text-shadow:0 0 0.450px currentColor;">atzd</div>
<div class="t" style="left:88px;top:153.7px;font-size:9.25px;line-height:11px;color:#8f8f8f;transform:scaleY(1.08);transform-origin:0 55%;text-shadow:0 0 0.450px currentColor;">H</div>
<div class="t" style="left:101.8px;top:153.7px;font-size:9.25px;line-height:11px;color:#8f8f8f;transform:scaleY(1.08);transform-origin:0 55%;text-shadow:0 0 0.450px currentColor;">2-{3-[(4-amino-2-methyl</div>
<svg class="a" style="left:44.5px;top:165.0px" width="10.500" height="11" viewBox="0 0 10 11"><path d="M2 0.600h5l2.400 2.400v7.400H2z" fill="#f2f6fa" stroke="#7d93a8" stroke-width="0.800"/><path d="M3.500 4h4M3.500 5.800h4M3.500 7.600h4" stroke="#9ab" stroke-width="0.600"/><circle cx="3.200" cy="4" r="2.900" fill="#2f9aa0" stroke="#1c6a70" stroke-width="0.500"/><path d="M1.300 4h3.800M3.200 1.400c-1.400 1.400-1.400 3.800 0 5.200M3.200 1.400c1.400 1.400 1.400 3.800 0 5.200" stroke="#c8f0f0" stroke-width="0.500" fill="none"/></svg>
<div class="t" style="left:57.8px;top:164.9px;font-size:9.25px;line-height:11px;color:#000;transform:scaleY(1.08);transform-origin:0 55%;text-shadow:0 0 0.450px currentColor;">pyruvate dehydrogenase</div>
<svg class="a" style="left:23.0px;top:178.0px" width="7" height="7" viewBox="0 0 7 7"><rect x="0.800" y="0.800" width="5.400" height="5.400" fill="#fff" stroke="#c2c2c2" stroke-width="0.800"/><path d="M2 3.500h3" stroke="#555" stroke-width="0.800"/></svg>
<svg class="a" style="left:32.2px;top:176.2px" width="9.800" height="10" viewBox="0 0 11 10" preserveAspectRatio="none"><rect width="11" height="10" fill="#07063e"/><circle cx="3" cy="5" r="1.700" fill="#a8a8ff"/><circle cx="8" cy="5" r="1.700" fill="#a8a8ff"/><path d="M1 2.500L5.500 7.500 10 2.500M1 7.500L5.500 2.500 10 7.500" stroke="#dcdcff" stroke-width="0.9" fill="none"/></svg>
<svg class="a" style="left:44.4px;top:176.0px" width="10" height="11" viewBox="0 0 10 11"><path d="M1.200 0.800c-.5 2.500-.3 5.500.8 8M2.800 0.600c-.4 2.800-.2 5.800 1 8.600" stroke="#1f3d58" stroke-width="1.300" fill="none"/><rect x="3.400" y="1.800" width="6.200" height="7.800" rx="1.800" fill="#4d94dc" stroke="#2a64a8" stroke-width="0.600"/><path d="M4.500 8.300V3.600L6.500 6.600 8.500 3.600V8.300" stroke="#fff" stroke-width="1.100" fill="none"/></svg>
<div class="t" style="left:57.8px;top:176.0px;font-size:9.25px;line-height:11px;color:#e0161c;transform:scaleY(1.08);transform-origin:0 55%;text-shadow:0 0 0.450px currentColor;">1pvd</div>
<div class="t" style="left:90.3px;top:176.0px;font-size:9.25px;line-height:11px;color:#8f8f8f;transform:scaleY(1.08);transform-origin:0 55%;text-shadow:0 0 0.450px currentColor;">[2*] ICM; 2.3Å</div>
<svg class="a" style="left:35.0px;top:189.1px" width="7" height="7" viewBox="0 0 7 7"><rect x="0.800" y="0.800" width="5.400" height="5.400" fill="#fff" stroke="#c2c2c2" stroke-width="0.800"/><path d="M2 3.500h3" stroke="#555" stroke-width="0.800"/><path d="M3.500 2v3" stroke="#555" stroke-width="0.800"/></svg>
<svg class="a" style="left:44.6px;top:187.4px" width="10.400" height="10.400" viewBox="0 0 10 10"><rect x="0.500" y="0.500" width="9" height="9" fill="#3fd23a" stroke="#157a10" stroke-width="1"/><rect x="3.600" y="3.600" width="2.800" height="2.800" fill="none" stroke="#222" stroke-width="0.900"/></svg>
<div class="t" style="left:57.8px;top:187.1px;font-size:9.25px;line-height:11px;color:#000;transform:scaleY(1.08);transform-origin:0 55%;text-shadow:0 0 0.450px currentColor;">a</div>
<div class="t" style="left:74.6px;top:187.1px;font-size:9.25px;line-height:11px;color:#8f8f8f;transform:scaleY(1.08);transform-origin:0 55%;text-shadow:0 0 0.450px currentColor;">537 A&nbsp; 1 site PDC1_YEAST</div>
<svg class="a" style="left:35.0px;top:200.2px" width="7" height="7" viewBox="0 0 7 7"><rect x="0.800" y="0.800" width="5.400" height="5.400" fill="#fff" stroke="#c2c2c2" stroke-width="0.800"/><path d="M2 3.500h3" stroke="#555" stroke-width="0.800"/><path d="M3.500 2v3" stroke="#555" stroke-width="0.800"/></svg>
<svg class="a" style="left:44.5px;top:198.4px" width="10.300" height="10.300" viewBox="0 0 10 10"><defs><radialGradient id="bg44203"><stop offset="0" stop-color="#e4e4ff"/><stop offset="0.300" stop-color="#9c9cff"/><stop offset="0.700" stop-color="#3432c0"/><stop offset="1" stop-color="#0a0850"/></radialGradient></defs><rect width="10" height="10" fill="#06053c"/><circle cx="5" cy="5" r="3.800" fill="url(#bg44203)"/></svg>
<div class="t" style="left:57.8px;top:198.2px;font-size:9.25px;line-height:11px;color:#000;transform:scaleY(1.08);transform-origin:0 55%;text-shadow:0 0 0.450px currentColor;">atpp</div>
<div class="t" style="left:88px;top:198.2px;font-size:9.25px;line-height:11px;color:#8f8f8f;transform:scaleY(1.08);transform-origin:0 55%;text-shadow:0 0 0.450px currentColor;">H</div>
<div class="t" style="left:101.8px;top:198.2px;font-size:9.25px;line-height:11px;color:#8f8f8f;transform:scaleY(1.08);transform-origin:0 55%;text-shadow:0 0 0.450px currentColor;">thiamine diphosphate</div>
<svg class="a" style="left:44.5px;top:209.3px" width="10.500" height="11" viewBox="0 0 10 11"><path d="M2 0.600h5l2.400 2.400v7.400H2z" fill="#f2f6fa" stroke="#7d93a8" stroke-width="0.800"/><path d="M3.500 4h4M3.500 5.800h4M3.500 7.600h4" stroke="#9ab" stroke-width="0.600"/><circle cx="3.200" cy="4" r="2.900" fill="#2f9aa0" stroke="#1c6a70" stroke-width="0.500"/><path d="M1.300 4h3.800M3.200 1.400c-1.400 1.400-1.400 3.800 0 5.200M3.200 1.400c1.400 1.400 1.400 3.800 0 5.200" stroke="#c8f0f0" stroke-width="0.500" fill="none"/></svg>
<div class="t" style="left:57.8px;top:209.2px;font-size:9.25px;line-height:11px;color:#000;transform:scaleY(1.08);transform-origin:0 55%;text-shadow:0 0 0.450px currentColor;">pyruvate decarboxylase; chain</div>
<svg class="a" style="left:21.0px;top:222.7px" width="7" height="7" viewBox="0 0 7 7"><rect x="0.800" y="0.800" width="5.400" height="5.400" fill="#fff" stroke="#c2c2c2" stroke-width="0.800"/><path d="M2 3.500h3" stroke="#555" stroke-width="0.800"/><path d="M3.500 2v3" stroke="#555" stroke-width="0.800"/></svg>
<div class="t" style="left:29px;top:220.7px;font-size:9.25px;line-height:11px;color:#000;transform:scaleY(1.08);transform-origin:0 55%;text-shadow:0 0 0.450px currentColor;">fields</div>
<div class="t" style="left:65.5px;top:220.7px;font-size:9.25px;line-height:11px;color:#8f8f8f;transform:scaleY(1.08);transform-origin:0 55%;text-shadow:0 0 0.450px currentColor;">(1 item)</div></div></div>
<svg class="a" style="left:80px;top:118px" width="56" height="38" viewBox="80 118 56 38"><ellipse cx="107.700" cy="135.700" rx="20.600" ry="15" fill="none" stroke="#b81c24" stroke-width="1.700"/></svg>
<div class="a" style="left:177px;top:90.500px;width:417.500px;height:298px;background:#000"></div>
<svg class="a" id="mol" style="left:177px;top:90px" width="419" height="299" viewBox="177 90 419 299">
<defs><filter id="mb" x="-5%" y="-5%" width="110%" height="110%"><feGaussianBlur stdDeviation="0.65"/></filter></defs><g filter="url(#mb)"><path d="M267.9 182.5C267.0 180.7 262.6 173.9 262.8 171.6C263.0 169.2 265.6 169.0 269.0 168.4C272.4 167.8 279.0 167.4 283.0 167.9C287.0 168.4 289.2 170.6 293.0 171.6C296.8 172.6 303.0 172.5 305.7 174.2C308.4 175.9 308.8 180.4 309.4 181.7" stroke="#8e8e28" stroke-width="1.1" fill="none" stroke-linecap="round"/><path d="M312.2 149.0C312.5 150.1 312.5 153.5 314.1 155.4C315.7 157.3 320.4 159.7 321.7 160.5" stroke="#8e8e28" stroke-width="1.1" fill="none" stroke-linecap="round"/><path d="M306.5 161.7C306.8 160.8 306.9 157.3 308.0 156.0C309.1 154.7 312.2 154.3 313.0 154.0" stroke="#8e8e28" stroke-width="1.1" fill="none" stroke-linecap="round"/><path d="M361.1 146.5C361.5 147.6 363.7 150.6 363.7 152.9C363.7 155.2 362.4 158.8 361.1 160.5C359.8 162.2 356.9 162.6 356.0 163.0" stroke="#8e8e28" stroke-width="1.1" fill="none" stroke-linecap="round"/><path d="M334.4 161.7C336.5 163.4 343.5 169.6 347.1 171.9C350.7 174.2 354.5 175.1 356.0 175.7" stroke="#8e8e28" stroke-width="1.1" fill="none" stroke-linecap="round"/><path d="M319.5 136.0C319.2 135.2 317.2 132.2 318.0 131.0C318.8 129.8 321.8 128.8 324.0 128.5C326.2 128.2 329.8 129.3 331.0 129.5" stroke="#8e8e28" stroke-width="1.1" fill="none" stroke-linecap="round"/><path d="M339.0 131.0C339.7 130.6 341.2 128.7 343.0 128.5C344.8 128.3 348.3 129.2 350.0 130.0C351.7 130.8 352.5 132.5 353.0 133.0" stroke="#8e8e28" stroke-width="1.1" fill="none" stroke-linecap="round"/><path d="M310.0 181.0C310.8 182.8 313.0 189.5 315.0 192.0C317.0 194.5 320.8 195.3 322.0 196.0" stroke="#8e8e28" stroke-width="1.1" fill="none" stroke-linecap="round"/><path d="M333.0 184.0C332.5 185.3 329.2 189.7 330.0 192.0C330.8 194.3 335.5 197.3 338.0 198.0C340.5 198.7 343.8 196.3 345.0 196.0" stroke="#8e8e28" stroke-width="1.1" fill="none" stroke-linecap="round"/><path d="M366.0 183.0C367.0 184.2 372.0 187.5 372.0 190.0C372.0 192.5 368.0 197.0 366.0 198.0C364.0 199.0 361.0 196.3 360.0 196.0" stroke="#8e8e28" stroke-width="1.1" fill="none" stroke-linecap="round"/><path d="M366.2 218.3C367.2 219.2 370.5 221.7 372.0 224.0C373.5 226.3 375.2 229.3 375.0 232.0C374.8 234.7 373.2 238.2 371.0 240.0C368.8 241.8 363.5 242.5 362.0 243.0" stroke="#8e8e28" stroke-width="1.1" fill="none" stroke-linecap="round"/><path d="M264.0 228.4C264.8 228.8 267.2 229.4 268.5 231.0C269.8 232.6 271.7 235.9 271.6 238.0C271.5 240.1 269.1 243.5 268.0 243.5C266.9 243.5 265.2 239.9 265.0 238.0C264.8 236.1 266.7 233.0 267.0 232.0" stroke="#8e8e28" stroke-width="1.1" fill="none" stroke-linecap="round"/><path d="M288.0 241.0C288.7 240.3 290.7 237.2 292.0 237.0C293.3 236.8 295.7 238.5 296.0 240.0C296.3 241.5 295.2 244.8 294.0 246.0C292.8 247.2 289.8 246.8 289.0 247.0" stroke="#8e8e28" stroke-width="1.1" fill="none" stroke-linecap="round"/><path d="M250.2 250.0C251.5 249.2 255.5 246.5 258.0 245.5C260.5 244.5 263.4 245.1 265.3 243.8C267.2 242.5 268.5 238.6 269.1 237.5" stroke="#8e8e28" stroke-width="1.1" fill="none" stroke-linecap="round"/><path d="M230.0 288.0C230.8 286.3 232.7 280.0 235.0 277.9C237.3 275.8 243.1 274.5 243.9 275.3C244.7 276.1 239.0 281.2 240.0 282.9C241.0 284.6 248.3 285.0 250.0 285.4" stroke="#8e8e28" stroke-width="1.1" fill="none" stroke-linecap="round"/><path d="M230.0 289.0C230.4 290.3 230.9 295.1 232.6 296.8C234.3 298.5 237.5 298.6 240.0 299.0C242.5 299.4 246.4 299.2 247.7 299.3" stroke="#8e8e28" stroke-width="1.1" fill="none" stroke-linecap="round"/><path d="M356.0 242.6C357.1 245.1 360.7 253.9 362.4 257.7C364.1 261.5 365.6 263.9 366.2 265.2" stroke="#8e8e28" stroke-width="1.1" fill="none" stroke-linecap="round"/><path d="M343.5 246.3C344.9 245.9 349.9 244.6 352.0 244.0C354.1 243.4 355.3 242.8 356.0 242.6" stroke="#8e8e28" stroke-width="1.1" fill="none" stroke-linecap="round"/><path d="M346.0 289.0C345.0 290.8 342.7 296.5 340.0 300.0C337.3 303.5 332.7 306.6 330.0 310.0C327.3 313.4 325.0 318.6 324.0 320.3" stroke="#8e8e28" stroke-width="1.1" fill="none" stroke-linecap="round"/><path d="M340.3 311.5C338.8 312.7 334.2 317.3 331.5 318.8C328.8 320.3 325.2 320.1 324.0 320.3" stroke="#8e8e28" stroke-width="1.1" fill="none" stroke-linecap="round"/><path d="M275.6 335.0C276.6 337.0 279.5 343.9 281.5 346.8C283.5 349.7 285.4 352.6 287.4 352.6C289.3 352.6 292.2 347.8 293.2 346.8" stroke="#8e8e28" stroke-width="1.1" fill="none" stroke-linecap="round"/><path d="M322.6 339.4C323.3 340.4 326.5 343.3 327.0 345.3C327.5 347.3 326.8 350.5 325.6 351.2C324.4 351.9 320.7 349.9 319.7 349.7" stroke="#8e8e28" stroke-width="1.1" fill="none" stroke-linecap="round"/><path d="M303.5 317.0C302.6 318.7 299.8 324.2 298.0 327.0C296.2 329.8 293.8 332.8 293.0 334.0" stroke="#8e8e28" stroke-width="1.1" fill="none" stroke-linecap="round"/><path d="M302.0 323.0C303.3 323.2 307.5 324.2 310.0 324.5C312.5 324.8 315.8 324.5 317.0 324.5" stroke="#8e8e28" stroke-width="1.1" fill="none" stroke-linecap="round"/><path d="M269.1 308.0C269.6 308.7 271.1 310.7 272.0 312.0C272.9 313.3 273.8 315.1 274.2 315.7" stroke="#8e8e28" stroke-width="1.1" fill="none" stroke-linecap="round"/><path d="M300.0 262.0C299.3 263.0 297.7 266.7 296.0 268.0C294.3 269.3 291.0 269.7 290.0 270.0" stroke="#8e8e28" stroke-width="1.1" fill="none" stroke-linecap="round"/><path d="M305.0 250.0C304.2 251.0 300.2 253.3 300.0 256.0C299.8 258.7 302.0 265.0 304.0 266.0C306.0 267.0 310.7 262.7 312.0 262.0" stroke="#8e8e28" stroke-width="1.1" fill="none" stroke-linecap="round"/><path d="M322.0 226.0C320.7 227.0 316.7 230.8 314.0 232.0C311.3 233.2 307.3 232.8 306.0 233.0" stroke="#8e8e28" stroke-width="1.1" fill="none" stroke-linecap="round"/><path d="M345.0 226.0C346.2 227.0 351.2 229.7 352.0 232.0C352.8 234.3 351.5 238.2 350.0 240.0C348.5 241.8 344.2 242.5 343.0 243.0" stroke="#8e8e28" stroke-width="1.1" fill="none" stroke-linecap="round"/><path d="M257.8 252.6C256.8 253.5 252.6 255.4 252.0 258.0C251.4 260.6 252.3 265.2 254.0 268.0C255.7 270.8 260.7 273.8 262.0 275.0" stroke="#8e8e28" stroke-width="1.1" fill="none" stroke-linecap="round"/><path d="M229.8 289.5C231.1 287.6 234.7 280.1 237.4 278.0C240.2 275.9 243.5 276.1 246.3 276.8C249.1 277.5 254.2 280.7 254.0 282.0C253.8 283.3 246.1 282.9 245.0 284.4C243.9 285.9 247.2 289.7 247.6 290.8" stroke="#8e8e28" stroke-width="1.1" fill="none" stroke-linecap="round"/><path d="M250.0 254.0C250.7 252.7 251.7 248.0 254.0 246.3C256.3 244.6 261.3 243.2 264.0 243.8C266.7 244.4 269.1 247.0 270.4 250.0C271.7 253.0 270.6 258.4 271.7 261.6C272.8 264.8 275.9 267.9 276.8 269.2" stroke="#8e8e28" stroke-width="1.1" fill="none" stroke-linecap="round"/><path d="M266.6 240.0C267.2 241.3 267.8 245.5 270.4 247.6C272.9 249.7 278.5 252.1 281.9 252.7C285.3 253.3 288.7 252.9 290.8 251.4C292.9 249.9 294.8 245.7 294.6 243.8C294.4 241.9 290.4 240.6 289.5 240.0" stroke="#8e8e28" stroke-width="1.1" fill="none" stroke-linecap="round"/><path d="M294.6 251.4C294.2 253.7 292.0 261.4 292.0 265.4C292.0 269.4 292.9 272.8 294.6 275.6C296.3 278.4 300.9 280.9 302.2 282.0" stroke="#8e8e28" stroke-width="1.1" fill="none" stroke-linecap="round"/><path d="M354.4 242.3C355.5 244.4 359.1 251.0 360.8 255.0C362.5 259.0 364.0 264.6 364.6 266.5" stroke="#8e8e28" stroke-width="1.1" fill="none" stroke-linecap="round"/><path d="M362.0 260.0C363.7 259.4 370.1 258.2 372.2 256.3C374.3 254.4 374.3 250.0 374.7 248.7" stroke="#8e8e28" stroke-width="1.1" fill="none" stroke-linecap="round"/><path d="M343.0 266.5C343.2 267.8 345.8 271.0 344.3 274.0C342.8 277.0 336.1 283.6 334.0 284.3C331.9 285.0 332.0 279.1 331.6 278.0" stroke="#8e8e28" stroke-width="1.1" fill="none" stroke-linecap="round"/><path d="M296.0 252.5C297.3 252.7 300.9 254.0 303.6 253.8C306.4 253.6 311.0 251.6 312.5 251.2" stroke="#8e8e28" stroke-width="1.1" fill="none" stroke-linecap="round"/><path d="M359.0 207.0C360.5 206.6 366.4 203.8 368.0 204.5C369.6 205.2 369.5 209.6 368.5 211.0C367.5 212.4 363.1 212.7 362.0 213.0" stroke="#8e8e28" stroke-width="1.1" fill="none" stroke-linecap="round"/><path d="M367.0 217.0C367.7 218.8 371.0 224.7 371.0 228.0C371.0 231.3 368.1 234.7 367.0 237.0C365.9 239.3 364.9 241.2 364.5 242.0" stroke="#8e8e28" stroke-width="1.1" fill="none" stroke-linecap="round"/><path d="M307.0 215.0C307.8 214.2 310.5 211.1 312.0 210.0C313.5 208.9 315.3 208.8 316.0 208.5" stroke="#8e8e28" stroke-width="1.1" fill="none" stroke-linecap="round"/><path d="M306.0 216.5C306.5 217.3 307.7 221.1 309.0 221.5C310.3 221.9 313.2 219.4 314.0 219.0" stroke="#8e8e28" stroke-width="1.1" fill="none" stroke-linecap="round"/><path d="M350.7 135.7L356.0 138.5M350.5 141.6L355.8 144.4M350.3 147.5L355.6 150.4M350.1 153.5L355.5 156.3M350.0 159.4L355.3 162.2M349.8 165.3L355.1 168.2" stroke="#545412" stroke-width="4.2" fill="none" stroke-linecap="round"/><path d="M356.2 132.6L350.7 135.7M356.0 138.5L350.5 141.6M355.8 144.4L350.3 147.5M355.6 150.4L350.1 153.5M355.5 156.3L350.0 159.4M355.3 162.2L349.8 165.3M355.1 168.2L349.6 171.2" stroke="#979728" stroke-width="5.6" fill="none" stroke-linecap="round"/><path d="M356.2 132.6L350.7 135.7M356.0 138.5L350.5 141.6M355.8 144.4L350.3 147.5M355.6 150.4L350.1 153.5M355.5 156.3L350.0 159.4M355.3 162.2L349.8 165.3M355.1 168.2L349.6 171.2" stroke="#c0c038" stroke-width="2.2" fill="none" stroke-linecap="round"/><path d="M356.7 180.8L361.7 178.6" stroke="#545412" stroke-width="4.6" fill="none" stroke-linecap="round"/><path d="M355.0 175.1L356.7 180.8M361.7 178.6L363.5 184.3" stroke="#979728" stroke-width="6.0" fill="none" stroke-linecap="round"/><path d="M355.0 175.1L356.7 180.8M361.7 178.6L363.5 184.3" stroke="#c0c038" stroke-width="2.4" fill="none" stroke-linecap="round"/><path d="" stroke="#545412" stroke-width="4.6" fill="none" stroke-linecap="round"/><path d="M320.1 133.7L322.5 139.2" stroke="#979728" stroke-width="6.0" fill="none" stroke-linecap="round"/><path d="M320.1 133.7L322.5 139.2" stroke="#c0c038" stroke-width="2.4" fill="none" stroke-linecap="round"/><path d="M340.5 135.5L344.3 134.5" stroke="#545412" stroke-width="3.5" fill="none" stroke-linecap="round"/><path d="M340.5 131.3L340.5 135.5M344.3 134.5L344.3 138.7" stroke="#979728" stroke-width="4.8" fill="none" stroke-linecap="round"/><path d="M340.5 131.3L340.5 135.5M344.3 134.5L344.3 138.7" stroke="#c0c038" stroke-width="1.9" fill="none" stroke-linecap="round"/><path d="M331.9 131.3L326.8 150.0" stroke="#545412" stroke-width="7.0" fill="none"/><path d="M331.9 131.3L326.8 150.0" stroke="#979728" stroke-width="5.6" fill="none"/><path d="M331.9 131.3L326.8 150.0" stroke="#c0c038" stroke-width="2.1" fill="none" opacity="0.55"/><path d="M322.1 148.7L325.4 155.3L331.5 151.3z" fill="#979728"/><path d="M340.8 133.8L337.0 156.0" stroke="#545412" stroke-width="7.0" fill="none"/><path d="M340.8 133.8L337.0 156.0" stroke="#979728" stroke-width="5.6" fill="none"/><path d="M340.8 133.8L337.0 156.0" stroke="#c0c038" stroke-width="2.1" fill="none" opacity="0.55"/><path d="M332.2 155.2L336.1 161.4L341.8 156.8z" fill="#979728"/><path d="" stroke="#545412" stroke-width="4.6" fill="none" stroke-linecap="round"/><path d="M343.4 150.9L342.7 156.4" stroke="#979728" stroke-width="6.0" fill="none" stroke-linecap="round"/><path d="M343.4 150.9L342.7 156.4" stroke="#c0c038" stroke-width="2.4" fill="none" stroke-linecap="round"/><path d="M320.5 152.9L328.0 163.0" stroke="#545412" stroke-width="6.4" fill="none"/><path d="M320.5 152.9L328.0 163.0" stroke="#979728" stroke-width="5.0" fill="none"/><path d="M320.5 152.9L328.0 163.0" stroke="#c0c038" stroke-width="1.9" fill="none" opacity="0.55"/><path d="M324.5 165.6L331.0 167.0L331.5 160.4z" fill="#979728"/><path d="M315.4 158.0L324.3 166.8" stroke="#545412" stroke-width="5.9" fill="none"/><path d="M315.4 158.0L324.3 166.8" stroke="#979728" stroke-width="4.5" fill="none"/><path d="M315.4 158.0L324.3 166.8" stroke="#c0c038" stroke-width="1.7" fill="none" opacity="0.55"/><path d="M321.5 169.6L327.5 169.9L327.1 164.0z" fill="#979728"/><path d="M305.8 165.6L310.2 167.3" stroke="#545412" stroke-width="4.6" fill="none" stroke-linecap="round"/><path d="M308.3 161.1L305.8 165.6M310.2 167.3L307.7 171.8" stroke="#979728" stroke-width="6.0" fill="none" stroke-linecap="round"/><path d="M308.3 161.1L305.8 165.6M310.2 167.3L307.7 171.8" stroke="#c0c038" stroke-width="2.4" fill="none" stroke-linecap="round"/><path d="M330.6 164.3L323.7 180.0" stroke="#545412" stroke-width="7.0" fill="none"/><path d="M330.6 164.3L323.7 180.0" stroke="#979728" stroke-width="5.6" fill="none"/><path d="M330.6 164.3L323.7 180.0" stroke="#c0c038" stroke-width="2.1" fill="none" opacity="0.55"/><path d="M319.3 178.1L321.5 185.0L328.1 181.9z" fill="#979728"/><path d="M334.4 166.8L332.0 181.0" stroke="#545412" stroke-width="5.9" fill="none"/><path d="M334.4 166.8L332.0 181.0" stroke="#979728" stroke-width="4.5" fill="none"/><path d="M334.4 166.8L332.0 181.0" stroke="#c0c038" stroke-width="1.7" fill="none" opacity="0.55"/><path d="M328.1 180.3L331.3 185.4L335.9 181.7z" fill="#979728"/><path d="M269.9 185.3L273.5 180.5M275.7 186.3L279.3 181.5M281.6 187.4L285.1 182.5M287.4 188.4L290.9 183.5M293.2 189.4L296.7 184.6M299.0 190.4L302.5 185.6M304.8 191.5L308.3 186.6M310.6 192.5L314.2 187.6" stroke="#545412" stroke-width="4.2" fill="none" stroke-linecap="round"/><path d="M267.7 179.4L269.9 185.3M273.5 180.5L275.7 186.3M279.3 181.5L281.6 187.4M285.1 182.5L287.4 188.4M290.9 183.5L293.2 189.4M296.7 184.6L299.0 190.4M302.5 185.6L304.8 191.5M308.3 186.6L310.6 192.5M314.2 187.6L316.4 193.5" stroke="#979728" stroke-width="5.6" fill="none" stroke-linecap="round"/><path d="M267.7 179.4L269.9 185.3M273.5 180.5L275.7 186.3M279.3 181.5L281.6 187.4M285.1 182.5L287.4 188.4M290.9 183.5L293.2 189.4M296.7 184.6L299.0 190.4M302.5 185.6L304.8 191.5M308.3 186.6L310.6 192.5M314.2 187.6L316.4 193.5" stroke="#c0c038" stroke-width="2.2" fill="none" stroke-linecap="round"/><path d="M323.7 187.1L324.8 183.0" stroke="#545412" stroke-width="4.3" fill="none" stroke-linecap="round"/><path d="M319.3 185.5L323.7 187.1M324.8 183.0L329.2 184.6" stroke="#979728" stroke-width="5.7" fill="none" stroke-linecap="round"/><path d="M319.3 185.5L323.7 187.1M324.8 183.0L329.2 184.6" stroke="#c0c038" stroke-width="2.3" fill="none" stroke-linecap="round"/><path d="M348.1 191.3L352.2 187.6" stroke="#545412" stroke-width="4.6" fill="none" stroke-linecap="round"/><path d="M344.6 186.4L348.1 191.3M352.2 187.6L355.7 192.6" stroke="#979728" stroke-width="6.0" fill="none" stroke-linecap="round"/><path d="M344.6 186.4L348.1 191.3M352.2 187.6L355.7 192.6" stroke="#c0c038" stroke-width="2.4" fill="none" stroke-linecap="round"/><path d="M353.3 202.0L359.4 205.8M352.4 208.4L358.5 212.1" stroke="#545412" stroke-width="4.6" fill="none" stroke-linecap="round"/><path d="M360.2 199.4L353.3 202.0M359.4 205.8L352.4 208.4M358.5 212.1L351.6 214.7" stroke="#979728" stroke-width="6.0" fill="none" stroke-linecap="round"/><path d="M360.2 199.4L353.3 202.0M359.4 205.8L352.4 208.4M358.5 212.1L351.6 214.7" stroke="#c0c038" stroke-width="2.4" fill="none" stroke-linecap="round"/><path d="M314.5 222.0Q330.0 206.0 346.0 198.5" stroke="#545412" stroke-width="8.1" fill="none"/><path d="M314.5 222.0Q330.0 206.0 346.0 198.5" stroke="#979728" stroke-width="6.7" fill="none"/><path d="M314.5 222.0Q330.0 206.0 346.0 198.5" stroke="#c0c038" stroke-width="2.5" fill="none" opacity="0.55"/><path d="M348.4 203.7L351.8 195.8L343.6 193.3z" fill="#979728"/><path d="M316.0 211.0Q326.0 202.0 338.0 197.0" stroke="#545412" stroke-width="6.4" fill="none"/><path d="M316.0 211.0Q326.0 202.0 338.0 197.0" stroke="#979728" stroke-width="5.0" fill="none"/><path d="M316.0 211.0Q326.0 202.0 338.0 197.0" stroke="#c0c038" stroke-width="1.9" fill="none" opacity="0.55"/><path d="M339.7 201.1L342.6 195.1L336.3 192.9z" fill="#979728"/><path d="M325.8 225.8Q338.0 214.0 351.0 209.4" stroke="#545412" stroke-width="7.5" fill="none"/><path d="M325.8 225.8Q338.0 214.0 351.0 209.4" stroke="#979728" stroke-width="6.1" fill="none"/><path d="M325.8 225.8Q338.0 214.0 351.0 209.4" stroke="#c0c038" stroke-width="2.3" fill="none" opacity="0.55"/><path d="M352.8 214.4L356.6 207.4L349.2 204.4z" fill="#979728"/><path d="M333.4 230.9Q345.0 224.0 356.0 218.3" stroke="#545412" stroke-width="7.0" fill="none"/><path d="M333.4 230.9Q345.0 224.0 356.0 218.3" stroke="#979728" stroke-width="5.6" fill="none"/><path d="M333.4 230.9Q345.0 224.0 356.0 218.3" stroke="#c0c038" stroke-width="2.1" fill="none" opacity="0.55"/><path d="M358.2 222.6L360.8 215.8L353.8 214.0z" fill="#979728"/><path d="M310.0 237.4L314.2 233.2" stroke="#545412" stroke-width="4.6" fill="none" stroke-linecap="round"/><path d="M306.6 231.9L310.0 237.4M314.2 233.2L317.6 238.6" stroke="#979728" stroke-width="6.0" fill="none" stroke-linecap="round"/><path d="M306.6 231.9L310.0 237.4M314.2 233.2L317.6 238.6" stroke="#c0c038" stroke-width="2.4" fill="none" stroke-linecap="round"/><path d="M300.0 238.0L299.8 239.5L299.4 240.5L299.0 240.8L298.9 240.4L299.2 239.3L300.0 238.0L301.1 236.8L302.5 236.1L303.9 236.1L305.1 236.9L305.8 238.3L306.0 240.0L305.8 241.5L305.4 242.5L305.0 242.8L304.9 242.4L305.2 241.3L306.0 240.0L307.1 238.8L308.5 238.1L309.9 238.1L311.1 238.9L311.8 240.3L312.0 242.0" stroke="#979728" stroke-width="1.5" fill="none" stroke-linejoin="round"/><path d="M343.9 236.8L347.7 233.7" stroke="#545412" stroke-width="4.6" fill="none" stroke-linecap="round"/><path d="M340.7 232.5L343.9 236.8M347.7 233.7L350.9 238.1" stroke="#979728" stroke-width="6.0" fill="none" stroke-linecap="round"/><path d="M340.7 232.5L343.9 236.8M347.7 233.7L350.9 238.1" stroke="#c0c038" stroke-width="2.4" fill="none" stroke-linecap="round"/><path d="" stroke="#545412" stroke-width="4.6" fill="none" stroke-linecap="round"/><path d="M369.3 222.8L371.7 228.2" stroke="#979728" stroke-width="6.0" fill="none" stroke-linecap="round"/><path d="M369.3 222.8L371.7 228.2" stroke="#c0c038" stroke-width="2.4" fill="none" stroke-linecap="round"/><path d="" stroke="#545412" stroke-width="4.6" fill="none" stroke-linecap="round"/><path d="M367.7 231.8L370.2 236.4" stroke="#979728" stroke-width="6.0" fill="none" stroke-linecap="round"/><path d="M367.7 231.8L370.2 236.4" stroke="#c0c038" stroke-width="2.4" fill="none" stroke-linecap="round"/><path d="M315.8 247.5L318.6 242.7M321.9 247.6L324.7 242.8M328.0 247.7L330.8 242.9M334.1 247.8L336.9 243.0" stroke="#545412" stroke-width="4.4" fill="none" stroke-linecap="round"/><path d="M312.5 242.6L315.8 247.5M318.6 242.7L321.9 247.6M324.7 242.8L328.0 247.7M330.8 242.9L334.1 247.8M336.9 243.0L340.2 247.9" stroke="#979728" stroke-width="5.7" fill="none" stroke-linecap="round"/><path d="M312.5 242.6L315.8 247.5M318.6 242.7L321.9 247.6M324.7 242.8L328.0 247.7M330.8 242.9L334.1 247.8M336.9 243.0L340.2 247.9" stroke="#c0c038" stroke-width="2.3" fill="none" stroke-linecap="round"/><path d="M317.0 260.0L317.2 262.1L317.0 263.7L316.7 264.2L316.4 263.7L316.4 262.1L316.7 260.0L317.5 257.9L318.6 256.4L319.9 255.9L321.2 256.5L322.2 258.1L322.8 260.2L323.0 262.4L322.9 263.9L322.5 264.5L322.2 263.9L322.2 262.3L322.6 260.2L323.3 258.1L324.5 256.6L325.8 256.1L327.0 256.7L328.1 258.3L328.7 260.5L328.9 262.6L328.7 264.2L328.4 264.7L328.1 264.1L328.0 262.6L328.4 260.5L329.2 258.4L330.3 256.8L331.6 256.3L332.9 257.0L333.9 258.5L334.5 260.7L334.7 262.8L334.5 264.4L334.2 264.9L333.9 264.4L333.9 262.8L334.2 260.7L335.0 258.6L336.1 257.1L337.4 256.6L338.7 257.2L339.7 258.8L340.3 260.9L340.5 263.1L340.4 264.6L340.0 265.2L339.7 264.6L339.7 263.0L340.1 260.9L340.8 258.8L342.0 257.3L343.3 256.8L344.5 257.4L345.6 259.0L346.2 261.2L346.4 263.3L346.2 264.9L345.9 265.4L345.6 264.8L345.5 263.3L345.9 261.2L346.7 259.1L347.8 257.5L349.1 257.0L350.4 257.7L351.4 259.2L352.0 261.4" stroke="#979728" stroke-width="1.5" fill="none" stroke-linejoin="round"/><path d="M320.8 261.3L323.4 258.2M326.2 261.6L328.8 258.6" stroke="#545412" stroke-width="3.8" fill="none" stroke-linecap="round"/><path d="M318.1 257.9L320.8 261.3M323.4 258.2L326.2 261.6M328.8 258.6L331.5 261.9" stroke="#979728" stroke-width="5.1" fill="none" stroke-linecap="round"/><path d="M318.1 257.9L320.8 261.3M323.4 258.2L326.2 261.6M328.8 258.6L331.5 261.9" stroke="#c0c038" stroke-width="2.0" fill="none" stroke-linecap="round"/><path d="M347.3 274.9L351.6 273.2" stroke="#545412" stroke-width="4.3" fill="none" stroke-linecap="round"/><path d="M346.5 269.9L347.3 274.9M351.6 273.2L352.4 278.1" stroke="#979728" stroke-width="5.7" fill="none" stroke-linecap="round"/><path d="M346.5 269.9L347.3 274.9M351.6 273.2L352.4 278.1" stroke="#c0c038" stroke-width="2.3" fill="none" stroke-linecap="round"/><path d="M255.6 256.8L262.6 257.5M257.3 262.6L264.3 263.3" stroke="#545412" stroke-width="4.3" fill="none" stroke-linecap="round"/><path d="M260.8 251.7L255.6 256.8M262.6 257.5L257.3 262.6M264.3 263.3L259.1 268.4" stroke="#979728" stroke-width="5.7" fill="none" stroke-linecap="round"/><path d="M260.8 251.7L255.6 256.8M262.6 257.5L257.3 262.6M264.3 263.3L259.1 268.4" stroke="#c0c038" stroke-width="2.3" fill="none" stroke-linecap="round"/><path d="M260.7 273.8L267.7 274.3M262.3 279.0L269.2 279.5M263.8 284.2L270.8 284.7" stroke="#545412" stroke-width="3.9" fill="none" stroke-linecap="round"/><path d="M266.1 269.1L260.7 273.8M267.7 274.3L262.3 279.0M269.2 279.5L263.8 284.2M270.8 284.7L265.4 289.4" stroke="#979728" stroke-width="5.2" fill="none" stroke-linecap="round"/><path d="M266.1 269.1L260.7 273.8M267.7 274.3L262.3 279.0M269.2 279.5L263.8 284.2M270.8 284.7L265.4 289.4" stroke="#c0c038" stroke-width="2.1" fill="none" stroke-linecap="round"/><path d="M267.0 294.5L272.8 296.5M268.0 300.6L273.7 302.5" stroke="#545412" stroke-width="4.4" fill="none" stroke-linecap="round"/><path d="M271.9 290.4L267.0 294.5M272.8 296.5L268.0 300.6M273.7 302.5L268.9 306.7" stroke="#979728" stroke-width="5.8" fill="none" stroke-linecap="round"/><path d="M271.9 290.4L267.0 294.5M272.8 296.5L268.0 300.6M273.7 302.5L268.9 306.7" stroke="#c0c038" stroke-width="2.3" fill="none" stroke-linecap="round"/><path d="M266.7 277.8L267.8 272.4M272.2 276.2L273.3 270.8M277.7 274.6L278.8 269.2" stroke="#545412" stroke-width="4.1" fill="none" stroke-linecap="round"/><path d="M262.3 274.0L266.7 277.8M267.8 272.4L272.2 276.2M273.3 270.8L277.7 274.6M278.8 269.2L283.2 273.0" stroke="#979728" stroke-width="5.4" fill="none" stroke-linecap="round"/><path d="M262.3 274.0L266.7 277.8M267.8 272.4L272.2 276.2M273.3 270.8L277.7 274.6M278.8 269.2L283.2 273.0" stroke="#c0c038" stroke-width="2.2" fill="none" stroke-linecap="round"/><path d="M272.4 284.7L277.2 281.5M278.6 287.5L283.3 284.3M284.8 290.2L289.5 287.0" stroke="#545412" stroke-width="4.6" fill="none" stroke-linecap="round"/><path d="M271.0 278.8L272.4 284.7M277.2 281.5L278.6 287.5M283.3 284.3L284.8 290.2M289.5 287.0L290.9 293.0" stroke="#979728" stroke-width="6.0" fill="none" stroke-linecap="round"/><path d="M271.0 278.8L272.4 284.7M277.2 281.5L278.6 287.5M283.3 284.3L284.8 290.2M289.5 287.0L290.9 293.0" stroke="#c0c038" stroke-width="2.4" fill="none" stroke-linecap="round"/><path d="M276.6 298.5L279.0 293.0" stroke="#545412" stroke-width="4.6" fill="none" stroke-linecap="round"/><path d="M271.5 294.6L276.6 298.5M279.0 293.0L284.1 296.8" stroke="#979728" stroke-width="6.0" fill="none" stroke-linecap="round"/><path d="M271.5 294.6L276.6 298.5M279.0 293.0L284.1 296.8" stroke="#c0c038" stroke-width="2.4" fill="none" stroke-linecap="round"/><path d="M270.9 308.5L275.8 307.8M274.1 312.7L279.0 312.1" stroke="#545412" stroke-width="3.8" fill="none" stroke-linecap="round"/><path d="M272.6 303.6L270.9 308.5M275.8 307.8L274.1 312.7M279.0 312.1L277.3 317.0" stroke="#979728" stroke-width="5.0" fill="none" stroke-linecap="round"/><path d="M272.6 303.6L270.9 308.5M275.8 307.8L274.1 312.7M279.0 312.1L277.3 317.0" stroke="#c0c038" stroke-width="2.0" fill="none" stroke-linecap="round"/><path d="M248.9 296.2L254.4 295.9" stroke="#545412" stroke-width="4.6" fill="none" stroke-linecap="round"/><path d="M249.3 290.3L248.9 296.2M254.4 295.9L253.9 301.9" stroke="#979728" stroke-width="6.0" fill="none" stroke-linecap="round"/><path d="M249.3 290.3L248.9 296.2M254.4 295.9L253.9 301.9" stroke="#c0c038" stroke-width="2.4" fill="none" stroke-linecap="round"/><path d="M307.4 289.0L329.6 281.0" stroke="#545412" stroke-width="6.4" fill="none"/><path d="M307.4 289.0L329.6 281.0" stroke="#979728" stroke-width="5.0" fill="none"/><path d="M307.4 289.0L329.6 281.0" stroke="#c0c038" stroke-width="1.9" fill="none" opacity="0.55"/><path d="M331.1 285.1L334.3 279.3L328.1 276.9z" fill="#979728"/><path d="M302.6 301.7Q320.0 294.0 337.5 289.0" stroke="#545412" stroke-width="7.5" fill="none"/><path d="M302.6 301.7Q320.0 294.0 337.5 289.0" stroke="#979728" stroke-width="6.1" fill="none"/><path d="M302.6 301.7Q320.0 294.0 337.5 289.0" stroke="#c0c038" stroke-width="2.3" fill="none" opacity="0.55"/><path d="M339.0 294.1L343.2 287.4L336.0 283.9z" fill="#979728"/><path d="M292.4 309.2L293.8 303.7M298.6 307.3L300.0 301.8M304.8 305.4L306.1 299.9M311.0 303.4L312.3 297.9M317.2 301.5L318.5 296.0M323.4 299.5L324.7 294.0M329.6 297.6L330.9 292.1M335.8 295.6L337.1 290.1" stroke="#545412" stroke-width="4.6" fill="none" stroke-linecap="round"/><path d="M287.6 305.7L292.4 309.2M293.8 303.7L298.6 307.3M300.0 301.8L304.8 305.4M306.1 299.9L311.0 303.4M312.3 297.9L317.2 301.5M318.5 296.0L323.4 299.5M324.7 294.0L329.6 297.6M330.9 292.1L335.8 295.6M337.1 290.1L341.9 293.7" stroke="#979728" stroke-width="6.0" fill="none" stroke-linecap="round"/><path d="M287.6 305.7L292.4 309.2M293.8 303.7L298.6 307.3M300.0 301.8L304.8 305.4M306.1 299.9L311.0 303.4M312.3 297.9L317.2 301.5M318.5 296.0L323.4 299.5M324.7 294.0L329.6 297.6M330.9 292.1L335.8 295.6M337.1 290.1L341.9 293.7" stroke="#c0c038" stroke-width="2.4" fill="none" stroke-linecap="round"/><path d="M296.0 314.0Q320.0 309.0 342.0 300.0" stroke="#545412" stroke-width="4.8" fill="none"/><path d="M296.0 314.0Q320.0 309.0 342.0 300.0" stroke="#979728" stroke-width="3.4" fill="none"/><path d="M296.0 314.0Q320.0 309.0 342.0 300.0" stroke="#c0c038" stroke-width="1.3" fill="none" opacity="0.55"/><path d="" stroke="#545412" stroke-width="4.6" fill="none" stroke-linecap="round"/><path d="M279.4 323.0L282.1 328.7" stroke="#979728" stroke-width="6.0" fill="none" stroke-linecap="round"/><path d="M279.4 323.0L282.1 328.7" stroke="#c0c038" stroke-width="2.4" fill="none" stroke-linecap="round"/><path d="M276.5 333.8L280.6 332.0" stroke="#545412" stroke-width="4.0" fill="none" stroke-linecap="round"/><path d="M275.9 329.0L276.5 333.8M280.6 332.0L281.3 336.8" stroke="#979728" stroke-width="5.3" fill="none" stroke-linecap="round"/><path d="M275.9 329.0L276.5 333.8M280.6 332.0L281.3 336.8" stroke="#c0c038" stroke-width="2.1" fill="none" stroke-linecap="round"/><path d="M315.0 318.1L319.9 320.0M316.6 324.6L321.5 326.5M318.2 331.1L323.1 333.0" stroke="#545412" stroke-width="4.6" fill="none" stroke-linecap="round"/><path d="M318.3 313.5L315.0 318.1M319.9 320.0L316.6 324.6M321.5 326.5L318.2 331.1M323.1 333.0L319.8 337.6" stroke="#979728" stroke-width="6.0" fill="none" stroke-linecap="round"/><path d="M318.3 313.5L315.0 318.1M319.9 320.0L316.6 324.6M321.5 326.5L318.2 331.1M323.1 333.0L319.8 337.6" stroke="#c0c038" stroke-width="2.4" fill="none" stroke-linecap="round"/><path d="M305.0 340.9L310.8 338.9M309.6 345.3L315.4 343.3" stroke="#545412" stroke-width="4.6" fill="none" stroke-linecap="round"/><path d="M306.2 334.5L305.0 340.9M310.8 338.9L309.6 345.3M315.4 343.3L314.3 349.7" stroke="#979728" stroke-width="6.0" fill="none" stroke-linecap="round"/><path d="M306.2 334.5L305.0 340.9M310.8 338.9L309.6 345.3M315.4 343.3L314.3 349.7" stroke="#c0c038" stroke-width="2.4" fill="none" stroke-linecap="round"/><path d="" stroke="#545412" stroke-width="4.6" fill="none" stroke-linecap="round"/><path d="M295.6 344.7L297.8 350.1" stroke="#979728" stroke-width="6.0" fill="none" stroke-linecap="round"/><path d="M295.6 344.7L297.8 350.1" stroke="#c0c038" stroke-width="2.4" fill="none" stroke-linecap="round"/><path d="M481.7 202.0C481.5 203.3 479.7 207.7 480.4 209.7C481.1 211.7 484.1 212.9 486.0 214.0C487.9 215.1 490.2 216.1 491.8 216.0C493.4 215.9 495.0 213.9 495.6 213.5" stroke="#278c1a" stroke-width="1.1" fill="none" stroke-linecap="round"/><path d="M499.4 223.6C501.5 224.0 508.8 224.5 512.0 226.2C515.2 227.9 516.9 231.0 518.5 233.8C520.1 236.6 521.2 240.4 521.5 243.0C521.8 245.6 520.2 248.5 520.0 249.6" stroke="#278c1a" stroke-width="1.1" fill="none" stroke-linecap="round"/><path d="M495.6 213.5C496.2 213.2 497.8 211.6 499.0 211.5C500.2 211.4 502.2 211.9 503.0 213.0C503.8 214.1 504.0 216.5 503.5 218.0C503.0 219.5 501.2 221.2 500.0 222.0C498.8 222.8 497.1 223.5 496.0 223.0C494.9 222.5 493.7 220.3 493.5 219.0C493.3 217.7 494.1 215.8 495.0 215.0C495.9 214.2 497.9 213.7 499.0 214.0C500.1 214.3 501.4 215.4 501.5 217.0C501.6 218.6 499.8 222.5 499.4 223.6" stroke="#278c1a" stroke-width="1.1" fill="none" stroke-linecap="round"/><path d="M394.5 205.9C394.7 208.4 395.1 216.0 395.8 221.1C396.6 226.2 398.1 232.7 399.0 236.3C399.9 239.9 401.7 240.2 401.5 242.7C401.3 245.1 399.4 248.3 398.0 251.0C396.6 253.7 393.8 257.7 393.0 259.0" stroke="#278c1a" stroke-width="1.1" fill="none" stroke-linecap="round"/><path d="M392.0 203.0C392.2 203.3 392.6 204.5 393.0 205.0C393.4 205.5 394.2 205.8 394.5 205.9" stroke="#278c1a" stroke-width="1.1" fill="none" stroke-linecap="round"/><path d="M393.8 300.3C395.5 300.8 400.6 303.4 404.0 303.2C407.4 302.9 411.1 299.0 414.4 298.8C417.7 298.6 421.1 301.5 424.0 302.0C426.9 302.5 430.4 303.1 432.0 301.8C433.6 300.5 433.2 295.6 433.5 294.4" stroke="#278c1a" stroke-width="1.1" fill="none" stroke-linecap="round"/><path d="M414.4 302.0C414.7 301.4 415.0 299.0 416.0 298.5C417.0 298.0 419.3 298.1 420.5 298.8C421.7 299.5 423.1 301.3 423.0 302.5C422.9 303.7 421.2 305.5 420.0 306.0C418.8 306.5 416.9 306.2 416.0 305.5C415.1 304.8 414.7 302.6 414.4 302.0" stroke="#278c1a" stroke-width="1.1" fill="none" stroke-linecap="round"/><path d="M432.0 301.8C433.7 301.3 438.7 299.8 442.0 299.0C445.3 298.2 448.8 297.3 452.0 297.0C455.2 296.7 459.5 297.0 461.0 297.0" stroke="#278c1a" stroke-width="1.1" fill="none" stroke-linecap="round"/><path d="M430.0 177.0C430.2 176.1 429.7 172.5 431.0 171.5C432.3 170.5 435.5 170.2 438.0 171.0C440.5 171.8 443.2 174.0 446.0 176.0C448.8 178.0 452.1 180.7 455.0 183.0C457.9 185.3 462.2 188.7 463.6 189.8" stroke="#278c1a" stroke-width="1.1" fill="none" stroke-linecap="round"/><path d="M427.0 221.0C427.5 221.8 429.8 224.2 430.0 226.0C430.2 227.8 427.7 230.3 428.0 232.0C428.3 233.7 430.3 235.8 432.0 236.0C433.7 236.2 437.3 234.5 438.0 233.0C438.7 231.5 436.3 228.0 436.0 227.0" stroke="#278c1a" stroke-width="1.1" fill="none" stroke-linecap="round"/><path d="M446.0 218.0C447.0 218.8 450.0 221.3 452.0 223.0C454.0 224.7 456.2 227.5 458.0 228.0C459.8 228.5 461.7 227.2 463.0 226.0C464.3 224.8 464.9 222.9 466.0 221.0C467.1 219.1 469.0 215.8 469.6 214.7" stroke="#278c1a" stroke-width="1.1" fill="none" stroke-linecap="round"/><path d="M450.0 230.0C451.0 230.3 454.0 232.0 456.0 232.0C458.0 232.0 460.0 230.0 462.0 230.0C464.0 230.0 465.8 232.0 468.0 232.0C470.2 232.0 474.1 230.3 475.3 230.0" stroke="#278c1a" stroke-width="1.1" fill="none" stroke-linecap="round"/><path d="M455.7 250.0C456.2 249.6 457.6 247.9 459.0 247.7C460.4 247.4 462.7 247.6 464.0 248.5C465.3 249.4 467.0 251.4 467.0 253.0C467.0 254.6 465.3 257.0 464.0 258.0C462.7 259.0 460.3 259.5 459.0 259.0C457.7 258.5 456.2 256.3 456.0 255.0C455.8 253.7 457.0 251.7 458.0 251.0C459.0 250.3 461.3 251.0 462.0 251.0" stroke="#278c1a" stroke-width="1.1" fill="none" stroke-linecap="round"/><path d="M452.0 240.0C452.5 241.0 454.4 244.3 455.0 246.0C455.6 247.7 455.6 249.3 455.7 250.0" stroke="#278c1a" stroke-width="1.1" fill="none" stroke-linecap="round"/><path d="M453.8 287.4C454.2 288.3 454.8 291.4 456.0 293.0C457.2 294.6 459.1 296.5 461.3 296.8C463.5 297.1 466.5 295.9 469.0 295.0C471.5 294.1 475.2 291.8 476.5 291.2" stroke="#278c1a" stroke-width="1.1" fill="none" stroke-linecap="round"/><path d="M461.0 291.0C460.8 291.8 459.3 294.8 460.0 296.0C460.7 297.2 463.3 298.7 465.0 298.5C466.7 298.3 469.5 296.5 470.0 295.0C470.5 293.5 469.2 290.5 468.0 289.5C466.8 288.5 463.8 289.1 463.0 289.0" stroke="#278c1a" stroke-width="1.1" fill="none" stroke-linecap="round"/><path d="M497.3 226.9C498.8 227.1 503.2 227.1 506.0 228.0C508.8 228.9 512.9 231.8 514.3 232.6" stroke="#278c1a" stroke-width="1.1" fill="none" stroke-linecap="round"/><path d="M495.4 279.8C496.3 280.1 500.4 280.8 501.0 281.7C501.6 282.6 499.9 284.1 499.0 285.0C498.1 285.9 496.0 287.0 495.4 287.4" stroke="#278c1a" stroke-width="1.1" fill="none" stroke-linecap="round"/><path d="M487.8 302.5C489.2 302.1 493.5 301.8 496.0 300.0C498.5 298.2 501.2 294.8 503.0 292.0C504.8 289.2 506.4 286.7 507.0 283.0C507.6 279.3 506.8 272.2 506.7 270.0" stroke="#278c1a" stroke-width="1.1" fill="none" stroke-linecap="round"/><path d="M385.5 270.0C385.6 271.7 385.9 276.7 386.0 280.0C386.1 283.3 385.7 287.3 386.0 290.0C386.3 292.7 387.7 295.0 388.0 296.0" stroke="#278c1a" stroke-width="1.1" fill="none" stroke-linecap="round"/><path d="M401.2 240.0C400.2 242.4 397.5 250.4 395.3 254.7C393.1 259.0 389.2 264.1 388.0 266.0" stroke="#278c1a" stroke-width="1.1" fill="none" stroke-linecap="round"/><path d="M454.0 265.0C455.0 265.5 458.2 267.3 460.0 268.0C461.8 268.7 463.2 268.1 465.0 269.4C466.8 270.7 469.8 274.9 470.8 276.0" stroke="#278c1a" stroke-width="1.1" fill="none" stroke-linecap="round"/><path d="M433.5 294.4C433.9 293.8 435.0 292.5 436.0 291.0C437.0 289.5 438.8 286.5 439.4 285.6" stroke="#278c1a" stroke-width="1.1" fill="none" stroke-linecap="round"/><path d="M486.0 243.9C486.3 244.6 487.0 247.0 488.0 248.0C489.0 249.0 491.3 249.7 492.0 250.0" stroke="#278c1a" stroke-width="1.1" fill="none" stroke-linecap="round"/><path d="M417.4 245.9C418.2 245.2 420.2 242.5 422.0 242.0C423.8 241.5 425.8 241.8 428.0 243.0C430.2 244.2 433.8 248.0 435.0 249.0" stroke="#278c1a" stroke-width="1.1" fill="none" stroke-linecap="round"/><path d="M392.0 202.0Q406.0 188.0 430.0 177.0" stroke="#15560e" stroke-width="7.9" fill="none"/><path d="M392.0 202.0Q406.0 188.0 430.0 177.0" stroke="#2b9c1d" stroke-width="6.5" fill="none"/><path d="M392.0 202.0Q406.0 188.0 430.0 177.0" stroke="#3ac428" stroke-width="2.5" fill="none" opacity="0.55"/><path d="M403.5 196.4L403.4 190.3M409.3 193.0L409.2 186.9M415.1 189.6L415.0 183.5M420.9 186.2L420.8 180.1" stroke="#15560e" stroke-width="4.6" fill="none" stroke-linecap="round"/><path d="M397.6 193.7L403.5 196.4M403.4 190.3L409.3 193.0M409.2 186.9L415.1 189.6M415.0 183.5L420.9 186.2M420.8 180.1L426.7 182.8" stroke="#2b9c1d" stroke-width="6.0" fill="none" stroke-linecap="round"/><path d="M397.6 193.7L403.5 196.4M403.4 190.3L409.3 193.0M409.2 186.9L415.1 189.6M415.0 183.5L420.9 186.2M420.8 180.1L426.7 182.8" stroke="#3ac428" stroke-width="2.4" fill="none" stroke-linecap="round"/><path d="M408.6 202.9L417.5 203.7M410.6 209.8L419.5 210.5" stroke="#15560e" stroke-width="4.6" fill="none" stroke-linecap="round"/><path d="M415.5 196.8L408.6 202.9M417.5 203.7L410.6 209.8M419.5 210.5L412.6 216.6" stroke="#2b9c1d" stroke-width="6.0" fill="none" stroke-linecap="round"/><path d="M415.5 196.8L408.6 202.9M417.5 203.7L410.6 209.8M419.5 210.5L412.6 216.6" stroke="#3ac428" stroke-width="2.4" fill="none" stroke-linecap="round"/><path d="M424.4 218.6L428.2 194.4" stroke="#15560e" stroke-width="7.9" fill="none"/><path d="M424.4 218.6L428.2 194.4" stroke="#2b9c1d" stroke-width="6.5" fill="none"/><path d="M424.4 218.6L428.2 194.4" stroke="#3ac428" stroke-width="2.5" fill="none" opacity="0.55"/><path d="M433.7 195.3L429.2 188.2L422.7 193.5z" fill="#2b9c1d"/><path d="M431.0 215.5L441.0 185.5" stroke="#15560e" stroke-width="8.5" fill="none"/><path d="M431.0 215.5L441.0 185.5" stroke="#2b9c1d" stroke-width="7.1" fill="none"/><path d="M431.0 215.5L441.0 185.5" stroke="#3ac428" stroke-width="2.7" fill="none" opacity="0.55"/><path d="M446.8 187.4L443.2 179.0L435.2 183.6z" fill="#2b9c1d"/><path d="M446.5 217.3L445.5 183.0" stroke="#15560e" stroke-width="9.1" fill="none"/><path d="M446.5 217.3L445.5 183.0" stroke="#2b9c1d" stroke-width="7.7" fill="none"/><path d="M446.5 217.3L445.5 183.0" stroke="#3ac428" stroke-width="2.9" fill="none" opacity="0.55"/><path d="M452.0 182.8L445.3 175.6L439.0 183.2z" fill="#2b9c1d"/><path d="M457.4 216.5L450.0 191.0" stroke="#15560e" stroke-width="7.9" fill="none"/><path d="M457.4 216.5L450.0 191.0" stroke="#2b9c1d" stroke-width="6.5" fill="none"/><path d="M457.4 216.5L450.0 191.0" stroke="#3ac428" stroke-width="2.5" fill="none" opacity="0.55"/><path d="M455.4 189.4L448.2 184.9L444.6 192.6z" fill="#2b9c1d"/><path d="" stroke="#15560e" stroke-width="4.6" fill="none" stroke-linecap="round"/><path d="M428.3 219.7L429.2 225.8" stroke="#2b9c1d" stroke-width="6.0" fill="none" stroke-linecap="round"/><path d="M428.3 219.7L429.2 225.8" stroke="#3ac428" stroke-width="2.4" fill="none" stroke-linecap="round"/><path d="M463.0 193.8L468.5 189.3M468.7 196.7L474.2 192.1M474.4 199.6L479.9 195.0" stroke="#15560e" stroke-width="4.6" fill="none" stroke-linecap="round"/><path d="M462.8 186.4L463.0 193.8M468.5 189.3L468.7 196.7M474.2 192.1L474.4 199.6M479.9 195.0L480.2 202.4" stroke="#2b9c1d" stroke-width="6.0" fill="none" stroke-linecap="round"/><path d="M462.8 186.4L463.0 193.8M468.5 189.3L468.7 196.7M474.2 192.1L474.4 199.6M479.9 195.0L480.2 202.4" stroke="#3ac428" stroke-width="2.4" fill="none" stroke-linecap="round"/><path d="M463.2 210.6L468.3 209.3" stroke="#15560e" stroke-width="3.6" fill="none" stroke-linecap="round"/><path d="M465.2 205.5L463.2 210.6M468.3 209.3L466.3 214.5" stroke="#2b9c1d" stroke-width="4.8" fill="none" stroke-linecap="round"/><path d="M465.2 205.5L463.2 210.6M468.3 209.3L466.3 214.5" stroke="#3ac428" stroke-width="1.9" fill="none" stroke-linecap="round"/><path d="M404.9 276.0Q410.0 260.0 418.0 245.5" stroke="#15560e" stroke-width="9.1" fill="none"/><path d="M404.9 276.0Q410.0 260.0 418.0 245.5" stroke="#2b9c1d" stroke-width="7.7" fill="none"/><path d="M404.9 276.0Q410.0 260.0 418.0 245.5" stroke="#3ac428" stroke-width="2.9" fill="none" opacity="0.55"/><path d="M423.7 248.7L421.6 239.0L412.3 242.3z" fill="#2b9c1d"/><path d="M410.0 288.5Q416.0 272.0 424.0 257.6" stroke="#15560e" stroke-width="9.1" fill="none"/><path d="M410.0 288.5Q416.0 272.0 424.0 257.6" stroke="#2b9c1d" stroke-width="7.7" fill="none"/><path d="M410.0 288.5Q416.0 272.0 424.0 257.6" stroke="#3ac428" stroke-width="2.9" fill="none" opacity="0.55"/><path d="M429.7 260.8L427.6 251.2L418.3 254.4z" fill="#2b9c1d"/><path d="M421.0 290.0Q423.0 276.0 426.9 262.0" stroke="#15560e" stroke-width="8.5" fill="none"/><path d="M421.0 290.0Q423.0 276.0 426.9 262.0" stroke="#2b9c1d" stroke-width="7.1" fill="none"/><path d="M421.0 290.0Q423.0 276.0 426.9 262.0" stroke="#3ac428" stroke-width="2.7" fill="none" opacity="0.55"/><path d="M432.8 263.6L428.7 255.4L421.0 260.4z" fill="#2b9c1d"/><path d="M429.1 288.5L430.6 273.8" stroke="#15560e" stroke-width="7.9" fill="none"/><path d="M429.1 288.5L430.6 273.8" stroke="#2b9c1d" stroke-width="6.5" fill="none"/><path d="M429.1 288.5L430.6 273.8" stroke="#3ac428" stroke-width="2.5" fill="none" opacity="0.55"/><path d="M436.2 274.4L431.2 267.5L425.0 273.2z" fill="#2b9c1d"/><path d="M393.6 273.8L392.7 267.7M398.9 269.7L398.0 263.5" stroke="#15560e" stroke-width="4.6" fill="none" stroke-linecap="round"/><path d="M387.3 271.9L393.6 273.8M392.7 267.7L398.9 269.7M398.0 263.5L404.3 265.5" stroke="#2b9c1d" stroke-width="6.0" fill="none" stroke-linecap="round"/><path d="M387.3 271.9L393.6 273.8M392.7 267.7L398.9 269.7M398.0 263.5L404.3 265.5" stroke="#3ac428" stroke-width="2.4" fill="none" stroke-linecap="round"/><path d="M386.6 297.7L390.9 295.6" stroke="#15560e" stroke-width="3.6" fill="none" stroke-linecap="round"/><path d="M386.7 292.7L386.6 297.7M390.9 295.6L390.7 300.7" stroke="#2b9c1d" stroke-width="4.9" fill="none" stroke-linecap="round"/><path d="M386.7 292.7L386.6 297.7M390.9 295.6L390.7 300.7" stroke="#3ac428" stroke-width="1.9" fill="none" stroke-linecap="round"/><path d="M403.3 292.9L407.1 290.5" stroke="#15560e" stroke-width="4.0" fill="none" stroke-linecap="round"/><path d="M401.9 288.3L403.3 292.9M407.1 290.5L408.5 295.1" stroke="#2b9c1d" stroke-width="5.3" fill="none" stroke-linecap="round"/><path d="M401.9 288.3L403.3 292.9M407.1 290.5L408.5 295.1" stroke="#3ac428" stroke-width="2.1" fill="none" stroke-linecap="round"/><path d="M436.7 253.8L442.6 249.7" stroke="#15560e" stroke-width="4.6" fill="none" stroke-linecap="round"/><path d="M436.6 246.2L436.7 253.8M442.6 249.7L442.7 257.3" stroke="#2b9c1d" stroke-width="6.0" fill="none" stroke-linecap="round"/><path d="M436.6 246.2L436.7 253.8M442.6 249.7L442.7 257.3" stroke="#3ac428" stroke-width="2.4" fill="none" stroke-linecap="round"/><path d="M443.3 261.2L450.3 261.0M445.6 266.6L452.7 266.4" stroke="#15560e" stroke-width="4.2" fill="none" stroke-linecap="round"/><path d="M448.0 255.7L443.3 261.2M450.3 261.0L445.6 266.6M452.7 266.4L448.0 271.9" stroke="#2b9c1d" stroke-width="5.5" fill="none" stroke-linecap="round"/><path d="M448.0 255.7L443.3 261.2M450.3 261.0L445.6 266.6M452.7 266.4L448.0 271.9" stroke="#3ac428" stroke-width="2.2" fill="none" stroke-linecap="round"/><path d="M447.8 275.0L449.7 281.9M443.0 278.9L444.9 285.7" stroke="#15560e" stroke-width="4.4" fill="none" stroke-linecap="round"/><path d="M454.5 278.1L447.8 275.0M449.7 281.9L443.0 278.9M444.9 285.7L438.1 282.7" stroke="#2b9c1d" stroke-width="5.8" fill="none" stroke-linecap="round"/><path d="M454.5 278.1L447.8 275.0M449.7 281.9L443.0 278.9M444.9 285.7L438.1 282.7" stroke="#3ac428" stroke-width="2.3" fill="none" stroke-linecap="round"/><path d="M456.4 267.9L460.2 265.5" stroke="#15560e" stroke-width="4.2" fill="none" stroke-linecap="round"/><path d="M454.7 263.3L456.4 267.9M460.2 265.5L461.9 270.1" stroke="#2b9c1d" stroke-width="5.6" fill="none" stroke-linecap="round"/><path d="M454.7 263.3L456.4 267.9M460.2 265.5L461.9 270.1" stroke="#3ac428" stroke-width="2.2" fill="none" stroke-linecap="round"/><path d="M474.9 235.2L481.6 233.1M478.4 239.6L485.1 237.5" stroke="#15560e" stroke-width="4.0" fill="none" stroke-linecap="round"/><path d="M478.1 228.7L474.9 235.2M481.6 233.1L478.4 239.6M485.1 237.5L481.9 244.0" stroke="#2b9c1d" stroke-width="5.3" fill="none" stroke-linecap="round"/><path d="M478.1 228.7L474.9 235.2M481.6 233.1L478.4 239.6M485.1 237.5L481.9 244.0" stroke="#3ac428" stroke-width="2.1" fill="none" stroke-linecap="round"/><path d="M488.3 237.0L494.1 233.1M492.7 240.1L498.5 236.2" stroke="#15560e" stroke-width="3.9" fill="none" stroke-linecap="round"/><path d="M489.7 229.9L488.3 237.0M494.1 233.1L492.7 240.1M498.5 236.2L497.1 243.3" stroke="#2b9c1d" stroke-width="5.1" fill="none" stroke-linecap="round"/><path d="M489.7 229.9L488.3 237.0M494.1 233.1L492.7 240.1M498.5 236.2L497.1 243.3" stroke="#3ac428" stroke-width="2.0" fill="none" stroke-linecap="round"/><path d="M461.3 281.7Q487.8 266.6 501.0 259.0" stroke="#15560e" stroke-width="9.1" fill="none"/><path d="M461.3 281.7Q487.8 266.6 501.0 259.0" stroke="#1f7a16" stroke-width="7.7" fill="none"/><path d="M461.3 281.7Q487.8 266.6 501.0 259.0" stroke="#3ac428" stroke-width="2.9" fill="none" opacity="0.55"/><path d="M504.3 264.7L507.4 255.3L497.7 253.3z" fill="#1f7a16"/><path d="M476.5 293.5Q499.1 274.1 506.7 257.1" stroke="#15560e" stroke-width="10.3" fill="none"/><path d="M476.5 293.5Q499.1 274.1 506.7 257.1" stroke="#2b9c1d" stroke-width="8.9" fill="none"/><path d="M476.5 293.5Q499.1 274.1 506.7 257.1" stroke="#3ac428" stroke-width="3.3" fill="none" opacity="0.55"/><path d="M513.5 260.2L510.1 249.4L499.9 254.0z" fill="#2b9c1d"/><path d="M475.4 277.1L473.5 269.8M480.2 273.8L478.2 266.5M484.9 270.5L482.9 263.2" stroke="#15560e" stroke-width="4.1" fill="none" stroke-linecap="round"/><path d="M468.8 273.1L475.4 277.1M473.5 269.8L480.2 273.8M478.2 266.5L484.9 270.5M482.9 263.2L489.6 267.2" stroke="#2b9c1d" stroke-width="5.4" fill="none" stroke-linecap="round"/><path d="M468.8 273.1L475.4 277.1M473.5 269.8L480.2 273.8M478.2 266.5L484.9 270.5M482.9 263.2L489.6 267.2" stroke="#3ac428" stroke-width="2.2" fill="none" stroke-linecap="round"/><path d="M480.6 298.8L485.7 297.0" stroke="#15560e" stroke-width="3.8" fill="none" stroke-linecap="round"/><path d="M481.9 293.3L480.6 298.8M485.7 297.0L484.4 302.5" stroke="#2b9c1d" stroke-width="5.1" fill="none" stroke-linecap="round"/><path d="M481.9 293.3L480.6 298.8M485.7 297.0L484.4 302.5" stroke="#3ac428" stroke-width="2.0" fill="none" stroke-linecap="round"/><path d="M501.0 242.0Q511.0 251.5 506.7 262.8" stroke="#15560e" stroke-width="6.8" fill="none"/><path d="M501.0 242.0Q511.0 251.5 506.7 262.8" stroke="#2b9c1d" stroke-width="5.3" fill="none"/><path d="M501.0 242.0Q511.0 251.5 506.7 262.8" stroke="#3ac428" stroke-width="2.0" fill="none" opacity="0.55"/><g stroke-linecap="round" fill="none"><path d="M468.900 256.200L473 252.500 478.400 249.600 482 251 485 253.400" stroke="#bcbcc4" stroke-width="1.300"/><path d="M485 253.400L488 250.500 490.600 249.600" stroke="#d03020" stroke-width="1.400"/><path d="M497.500 252.500L501.500 251" stroke="#d0d0d0" stroke-width="1.200"/><path d="M301 273L303.500 280" stroke="#8a2a14" stroke-width="1.600"/><path d="M298 262l2 5" stroke="#5a5a8a" stroke-width="0.900"/></g></g>
</svg>
<!-- right toolbar -->
<div class="a" style="left:594.500px;top:50px;width:18px;height:341px;background:#f0f0f0;border-right:1px solid #fafafa"></div>
<div class="btn" style="left:596.700px;top:76.700px;width:14.300px;height:11.800px;background:#eaeaea;border-color:#7a7a7a"></div>
<svg class="a" style="left:594px;top:50px" width="20" height="342" viewBox="594 50 20 342" font-family="Liberation Sans, sans-serif">
<g fill="#c4c4c4"><g id="hg"><rect x="598" y="54.500" width="1" height="1"/><rect x="600.400" y="54.500" width="1" height="1"/><rect x="602.800" y="54.500" width="1" height="1"/><rect x="605.200" y="54.500" width="1" height="1"/><rect x="607.600" y="54.500" width="1" height="1"/></g><use href="#hg" y="166"/><use href="#hg" y="260.500"/></g>
<path d="M598 152h11M598 214h11M598 308.500h11" stroke="#d0d0d0" stroke-width="0.800"/><path d="M598 153h11M598 215h11M598 309.500h11" stroke="#fff" stroke-width="0.800"/>
<!-- target -->
<circle cx="603.700" cy="64.300" r="4.800" fill="#d8d8c4" stroke="#55553a" stroke-width="1.700"/><circle cx="603.700" cy="64.300" r="2.200" fill="#f2f2e6" stroke="#5a5a40" stroke-width="1.100"/><circle cx="603.700" cy="64.300" r="0.700" fill="#555"/>
<!-- rotate -->
<path d="M606.800 80.300a3.500 3.500 0 1 0 .600 4.200" fill="none" stroke="#111" stroke-width="1.400"/><path d="M604.800 78.400l3.800.400-1.200 3.400z" fill="#d01828"/><path d="M605.400 85.800l2.800.600" stroke="#111" stroke-width="1.200"/>
<!-- move -->
<path d="M603.500 91.600v9.400M598.800 96.300h9.400" stroke="#b01820" stroke-width="1.500"/><path d="M603.500 90.400l2 2.400h-4zM603.500 102.200l2-2.400h-4zM597.600 96.300l2.400-2v4zM609.400 96.300l-2.400-2v4z" fill="#b01820"/><circle cx="603.500" cy="96.300" r="1.100" fill="#111"/>
<!-- zoom -->
<circle cx="605.400" cy="108.600" r="3.300" fill="#f4f4f4" stroke="#333" stroke-width="1.100"/><path d="M603 111l-3.800 4.400" stroke="#d01828" stroke-width="2"/>
<!-- z rot -->
<path d="M599.500 123c2-2.500 6.500-2.500 8.500 0M608.500 128c-2 2.500-6.500 2.500-8.500 0" fill="none" stroke="#c01820" stroke-width="1.700"/><path d="M608.800 120.800v3.200h-3.200zM599.200 130.200v-3.200h3.200z" fill="#c01820"/><text x="601.300" y="128.300" font-size="7.400" font-weight="bold" fill="#111">2</text>
<!-- brown -->
<path d="M599 146.500l4.600-7.500 4.600 7.500z" fill="#c03a18"/><circle cx="603.600" cy="142" r="2.300" fill="#e8a040"/><path d="M598.400 146.800h10.600" stroke="#5a2008" stroke-width="1.600"/><circle cx="600.200" cy="146" r="1.400" fill="#a02810"/><circle cx="607" cy="146" r="1.400" fill="#a02810"/>
<!-- green rect -->
<rect x="598.200" y="156.600" width="10.600" height="8.800" fill="#7be03c" stroke="#2a6a18" stroke-width="1" stroke-dasharray="1.600 0.800"/>
<!-- green lasso -->
<circle cx="603.800" cy="177.600" r="3.500" fill="#7be03c" stroke="#1f6a14" stroke-width="1.300"/><path d="M600 172l3 2.600" stroke="#1f6a14" stroke-width="1.200"/><path d="M599.200 171l2.600.2-.8 2.200z" fill="#111"/>
<!-- green x -->
<rect x="600.800" y="187.600" width="5.600" height="5.600" fill="#5ad03c" stroke="#2a7a18" stroke-width="0.900"/><path d="M602 188.800l3.200 3.200M605.200 188.800l-3.200 3.200" stroke="#e8ffe0" stroke-width="0.900"/>
<!-- AS -->
<rect x="599.800" y="199.600" width="3" height="2.600" fill="#5ad03c" stroke="#2a7a18" stroke-width="0.500"/><rect x="604.400" y="199.600" width="3" height="2.600" fill="#5ad03c" stroke="#2a7a18" stroke-width="0.500"/><text x="598.800" y="210" font-size="7.400" font-weight="bold" font-style="italic" fill="#222">AS</text>
<!-- yellow bars -->
<g fill="#e8d84a" stroke="#b8a020" stroke-width="0.400"><ellipse cx="603.800" cy="233.600" rx="5.200" ry="1.700"/><ellipse cx="603.800" cy="240.600" rx="5.200" ry="1.500"/><ellipse cx="603.800" cy="248.800" rx="5.200" ry="1.500"/><ellipse cx="603.800" cy="257" rx="5.200" ry="1.500"/><ellipse cx="603.800" cy="261.800" rx="5.200" ry="1.500"/><ellipse cx="603.800" cy="268.600" rx="5.200" ry="1.500"/><ellipse cx="603.800" cy="278" rx="5.200" ry="1.500"/></g>
<g stroke="#111" stroke-width="1.100" fill="#111"><path d="M603.800 226.500v6M603.800 241.500v6M603.800 254.500v9.500M603.800 269.500v7"/><path d="M603.800 225.600l1.500 2h-3zM603.800 248.400l1.500-2h-3zM603.800 253.400l1.500 2h-3zM603.800 265.200l1.500-2h-3zM603.800 277.500l1.500-2h-3z" stroke="none"/></g>
<!-- red fan -->
<path d="M598.500 289l10-4.500v9.500z" fill="#f05a5a"/><path d="M598.500 289l10-3M598.500 289l10-.5M598.500 289l10 2M598.500 289l10 4.500" stroke="#c81818" stroke-width="0.500"/><path d="M604 292.500l2.600 2.600" stroke="#111" stroke-width="1.100"/>
<!-- lock -->
<path d="M601.400 300.800v-2.200a2.400 2.400 0 0 1 4.800 0v2.200" fill="none" stroke="#222" stroke-width="1.300"/><rect x="599.400" y="300.800" width="8.800" height="6.200" fill="#e8e040" stroke="#222" stroke-width="0.900"/>
<!-- red rotate -->
<ellipse cx="603.800" cy="329.400" rx="4.800" ry="2.200" fill="none" stroke="#c01820" stroke-width="1.200"/><ellipse cx="603.800" cy="329.400" rx="2.200" ry="4.600" fill="none" stroke="#222" stroke-width="1.100"/><path d="M599.500 333.500l8.600-8.200" stroke="#c01820" stroke-width="1"/>
<!-- Z arrows -->
<text x="598.200" y="346" font-size="7" fill="#333">Z</text><path d="M606.300 337.500v10" stroke="#333" stroke-width="0.900"/><path d="M606.300 336.400l1.600 2.200h-3.200zM606.300 348.600l1.600-2.200h-3.200z" fill="#333"/><path d="M604.500 341h3.600M604.500 344h3.600" stroke="#333" stroke-width="0.700"/>
<!-- star -->
<path d="M599 361.500l9-8M600 353.500l6.500 8.500M599 357l9.500 1.500" stroke="#222" stroke-width="1" fill="none"/><path d="M607.400 352.600l1.400 2.600-2.800.2z" fill="#222"/>
<!-- esc -->
<path d="M603.800 366.500v3M601 367.800l5.600 0" stroke="#666" stroke-width="0.800"/><path d="M603.800 365.400l1.300 1.700h-2.600z" fill="#666"/><text x="599" y="376.200" font-size="4.600" font-weight="bold" fill="#555">ESC</text>
<!-- hand -->
<path d="M600.300 386c-.8-1.600-1.900-3-1.100-3.700.9-.7 1.600.4 2.100 1.100v-3.200c0-1 1.500-1 1.500 0v-.9c0-1 1.500-1 1.500 0v.7c0-1 1.500-1 1.500 0v.9c0-.9 1.400-.9 1.400 0v4.300l-.5 2.400h-5z" fill="#3a3a3a" stroke="#222" stroke-width="0.700"/><path d="M601.200 386.200h6.200v3.200h-6.200z" fill="#fafafa" stroke="#333" stroke-width="0.700"/>
</svg>
<!-- terminal -->
<div class="a" style="left:5px;top:390.5px;width:13.5px;height:53.5px;background:#ebebeb;border:1px solid #cfcfcf"></div>
<svg class="a" style="left:7px;top:393px" width="10" height="20" viewBox="0 0 10 20"><path d="M2 1.800l4.600 4.800M6.600 1.800L2 6.600" stroke="#111" stroke-width="1.2"/><rect x="3.400" y="11.600" width="3.800" height="3.400" fill="#eee" stroke="#222" stroke-width="0.8"/><rect x="2" y="13.400" width="3.800" height="3.400" fill="#eee" stroke="#222" stroke-width="0.8"/></svg>
<div class="t" style="left:-2px;top:425.500px;width:28px;text-align:center;font-size:6.600px;color:#222;transform:rotate(-90deg);transform-origin:50% 50%">Terminal</div>
<div class="a" style="left:19.800px;top:390.500px;width:575.200px;height:53.500px;background:#fff;border:1px solid #bdbdbd"></div>
<div class="a" id="term" style="left:21.600px;top:391.900px;font-family:'Liberation Mono',monospace;font-size:8.350px;line-height:10.350px;white-space:pre;color:#333"><span style="color:#c99a52"> Warning&gt; amide group of  a_1pvd.a/^Q523  was flipped
 Warning&gt; amide group of  a_1pvd.a/^Q547  was flipped</span>
icm/1pvd&gt; if <span style="color:#3f9a4a">yes</span> cool a_ <span style="color:#3f9a4a">no</span>
icm/1pvd&gt; </div>
<div class="a" style="left:72px;top:423px;width:4.500px;height:8.500px;background:#8a8a8a"></div>
<!-- h scrollbar -->
<div class="a" style="left:20.800px;top:433px;width:562.700px;height:10px;background:#efefef;border-top:1px solid #e2e2e2"></div>
<div class="a" style="left:31.500px;top:434px;width:513px;height:8.500px;background:linear-gradient(#ededed,#d6d6d6 50%,#c2c2c2);border:1px solid #a8a8a8;border-radius:2px"></div>
<svg class="a" style="left:22px;top:435px" width="6" height="7" viewBox="0 0 6 7"><path d="M4.500 1L1.500 3.500 4.500 6z" fill="#444"/></svg>
<svg class="a" style="left:576px;top:435px" width="6" height="7" viewBox="0 0 6 7"><path d="M1.500 1L4.500 3.500 1.500 6z" fill="#444"/></svg>
<svg class="a" style="left:285px;top:435px" width="6" height="6" viewBox="0 0 6 6"><path d="M1 0.800v4M3 0.800v4M5 0.800v4" stroke="#555" stroke-width="0.900"/></svg>
<!-- v scrollbar -->
<div class="a" style="left:583.500px;top:391.500px;width:10.500px;height:41.500px;background:#f1f1f1;border-left:1px solid #e2e2e2"></div>
<svg class="a" style="left:585.500px;top:394.800px" width="7" height="6" viewBox="0 0 7 6"><path d="M1 4.500L3.500 1.500 6 4.500z" fill="#444"/></svg>
<svg class="a" style="left:585.500px;top:423px" width="7" height="6" viewBox="0 0 7 6"><path d="M1 1.500L3.500 4.500 6 1.500z" fill="#444"/></svg>
<div class="a" style="left:584.300px;top:409.500px;width:9.700px;height:11.500px;background:linear-gradient(90deg,#f4f4f4,#d8d8d8);border:1px solid #aeaeae;border-radius:2px"></div>
<!-- status bar -->
<div class="a" style="left:391px;top:447px;width:1px;height:19px;background:#d4d4d4"></div>
<div class="a" style="left:600px;top:447px;width:1px;height:19px;background:#d4d4d4"></div>
<div class="t" style="left:465px;top:451.300px;font-size:7.500px;color:#222">2 ICM Obj</div>
<svg class="a" style="left:604px;top:457px" width="9" height="9" viewBox="0 0 9 9"><g fill="#b5b5b5"><rect x="6" y="0.500" width="1.400" height="1.400"/><rect x="6" y="3.200" width="1.400" height="1.400"/><rect x="3.300" y="3.200" width="1.400" height="1.400"/><rect x="6" y="5.900" width="1.400" height="1.400"/><rect x="3.300" y="5.900" width="1.400" height="1.400"/><rect x="0.600" y="5.900" width="1.400" height="1.400"/></g></svg>
<div class="btn" style="left:47.200px;top:446.400px;width:17.100px;height:17px;border-radius:2.500px"></div>
<div class="btn" style="left:66.200px;top:446.400px;width:17.200px;height:17px;border-radius:2.500px"></div>
<div class="btn" style="left:85.300px;top:446.400px;width:16.300px;height:17px;border-radius:2.500px;border-color:#dcdcdc;background:#f7f7f7"></div>
<div class="btn" style="left:106.300px;top:446.400px;width:16.400px;height:17px;border-radius:2.500px"></div>
<div class="btn" style="left:124.600px;top:446.400px;width:17.100px;height:17px;border-radius:2.500px"></div>
<div class="btn" style="left:143.300px;top:446.400px;width:17.500px;height:17px;border-radius:2.500px"></div>
<div class="btn" style="left:162.300px;top:446.400px;width:17px;height:17px;border-radius:2.500px"></div>
<svg class="a" style="left:5px;top:445px" width="180" height="20" viewBox="5 445 180 20" font-family="Liberation Sans, sans-serif">
<rect x="7.500" y="448.300" width="13.200" height="12.700" rx="2" fill="#f6f6f6" stroke="#e0e0e0" stroke-width="0.700"/><circle cx="14.200" cy="454.700" r="5" fill="#9c9c9c"/><path d="M11.600 452.100l5.200 5.200M16.800 452.100l-5.200 5.200" stroke="#f8f8f8" stroke-width="1.500"/>
<rect x="26.500" y="448.300" width="13.200" height="12.700" rx="2" fill="#f6f6f6" stroke="#e0e0e0" stroke-width="0.700"/><rect x="28.200" y="449.900" width="9.800" height="9.600" rx="2.400" fill="#8c8c8c"/><text x="29.300" y="457.200" font-size="5.800" font-weight="bold" fill="#b8b8b8" textLength="7.600" lengthAdjust="spacingAndGlyphs">GO</text>
<!-- tree -->
<rect x="51" y="449.600" width="8.400" height="9" fill="#e8e8a0" stroke="#8a8a4a" stroke-width="0.600"/><path d="M52.800 450.800v6.400M52.800 452.800h3M52.800 455.200h3M52.800 457.200h3" stroke="#222" stroke-width="0.800" fill="none"/><rect x="55.600" y="451.800" width="2.600" height="1.800" fill="#333"/><rect x="55.600" y="454.400" width="2.600" height="1.800" fill="#333"/><path d="M59 459.200h3.400l-1.700 1.900z" fill="#111"/>
<!-- window -->
<rect x="69.800" y="450" width="10" height="9.600" fill="#ececec" stroke="#111" stroke-width="1.100"/><rect x="69.800" y="450" width="10" height="2.600" fill="#111"/>
<!-- disabled -->
<rect x="89.200" y="451.200" width="8.600" height="7.400" fill="#e4e4e4" stroke="#a8a8a8" stroke-width="0.900"/><path d="M91.800 451.200v5h6" stroke="#a8a8a8" stroke-width="0.900" fill="none"/>
<!-- gear -->
<circle cx="113.600" cy="454" r="3.200" fill="none" stroke="#3c3c3c" stroke-width="2" stroke-dasharray="1.600 0.900"/><circle cx="113.600" cy="454" r="2.700" fill="none" stroke="#3c3c3c" stroke-width="1.100"/><path d="M117.600 459.400h3.400l-1.700 1.900z" fill="#111"/>
<!-- camera -->
<rect x="127.600" y="451.600" width="10.400" height="6.800" rx="1" fill="#222"/><rect x="130.400" y="450" width="4" height="2" fill="#222"/><circle cx="133" cy="455" r="2.200" fill="#222" stroke="#e8e8e8" stroke-width="0.900"/><rect x="128.600" y="452.600" width="1.800" height="1.200" fill="#ddd"/><path d="M136.400 459.400h3.400l-1.700 1.900z" fill="#111"/>
<!-- eye -->
<path d="M146.800 455.400c2.600-3 7.400-3 10.200-.2" stroke="#222" stroke-width="1.700" fill="none"/><ellipse cx="152" cy="456" rx="3.600" ry="1.800" fill="#333"/><path d="M147.500 452.300l2 .9M150.500 451.300l1 1.200M154 451.300l-.4 1.300" stroke="#333" stroke-width="0.700"/>
<!-- gear + orange -->
<circle cx="168.800" cy="453" r="2.700" fill="none" stroke="#8a8a8a" stroke-width="1.800" stroke-dasharray="1.400 0.800"/><circle cx="168.800" cy="453" r="2.300" fill="#c8d0d8" stroke="#8a8a8a" stroke-width="0.800"/><path d="M169.500 454l4.800 4.200" stroke="#d8822a" stroke-width="2.200" stroke-linecap="round"/><path d="M174.800 459.400h3.400l-1.700 1.900z" fill="#111"/>
</svg>
<div class="a" style="left:340.200px;top:0;width:278.300px;height:23px;background:linear-gradient(rgba(0,0,50,0) 55%,rgba(0,0,50,.2)),linear-gradient(90deg,#1d5bb0,#2b6bbf 50%,#3b7ccb);box-shadow:0 1.5px 2px rgba(40,60,100,.55)"></div>
<div class="t" style="left:347px;top:4.300px;font-size:13.300px;color:#fff;letter-spacing:0.330px">Note each object is an ICM object.</div>
</div>
</body>
</html>
